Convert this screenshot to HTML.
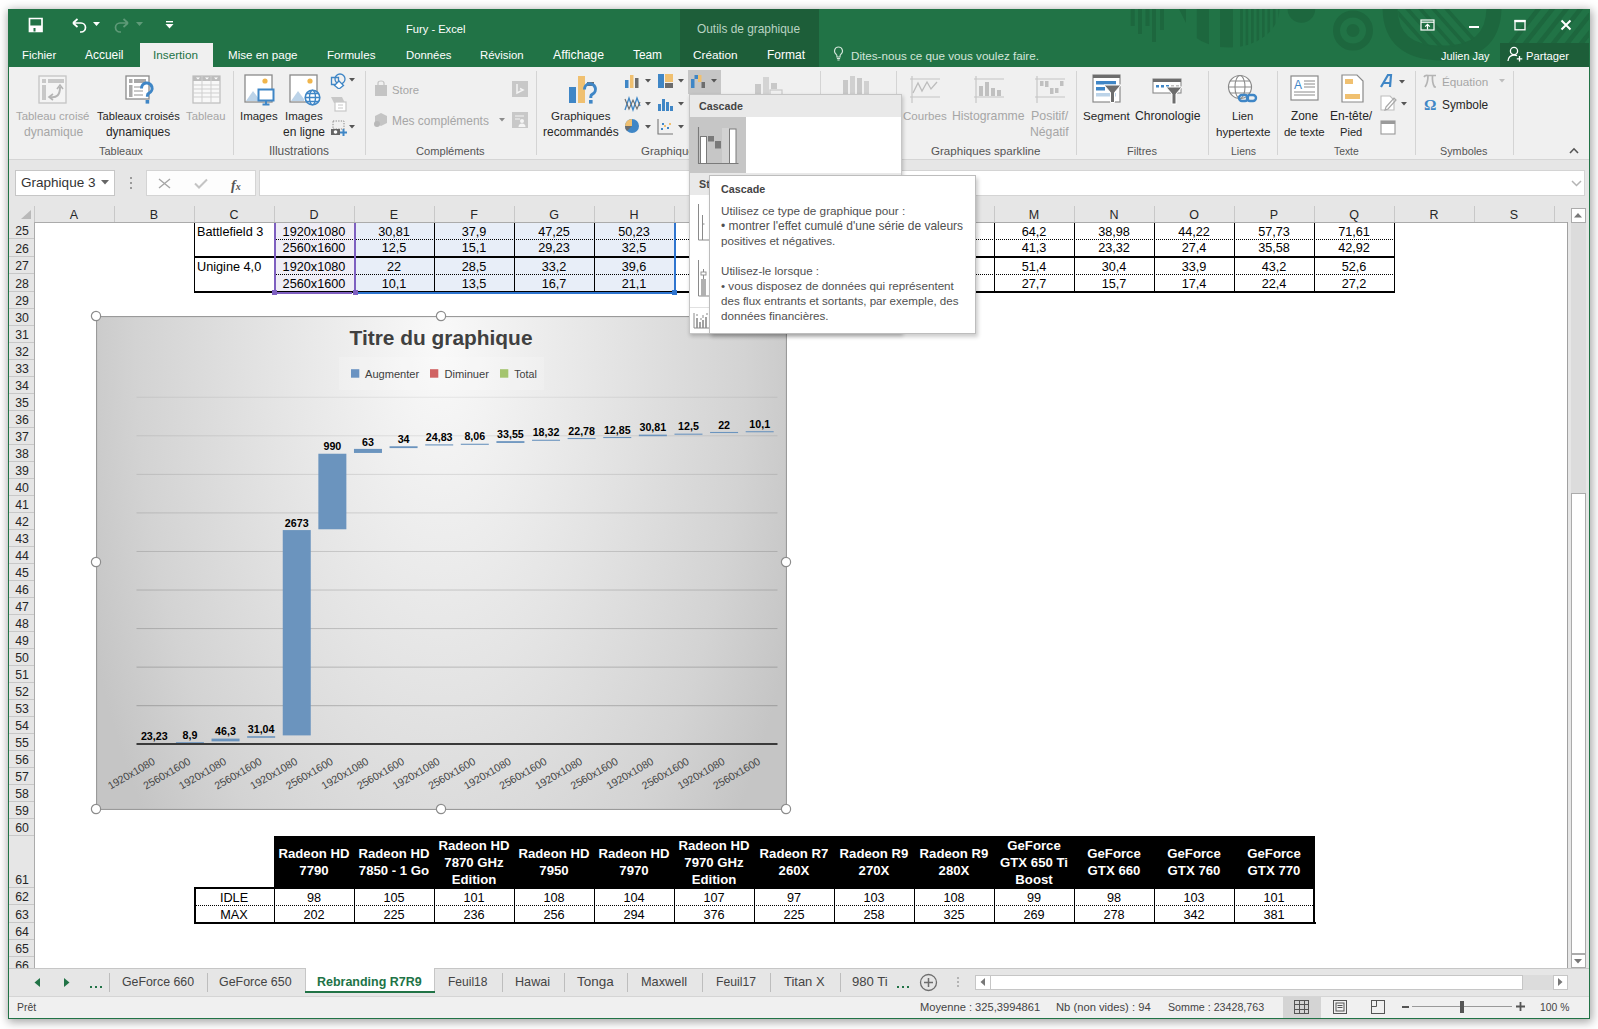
<!DOCTYPE html><html><head><meta charset="utf-8"><style>
html,body{margin:0;padding:0;}
body{width:1598px;height:1029px;position:relative;overflow:hidden;background:#fff;font-family:"Liberation Sans",sans-serif;}
.t{position:absolute;white-space:nowrap;line-height:1;}
.r{position:absolute;}
</style></head><body>
<div class="r" style="left:8px;top:9px;width:1582px;height:1010px;background:#fff;box-shadow:1px 2px 9px 1px rgba(0,0,0,0.36);"></div>
<div class="r" style="left:8px;top:9px;width:1582px;height:58px;background:#217346;"></div>
<div class="r" style="left:680px;top:9px;width:139px;height:58px;background:#1d5e39;"></div>
<div class="r" style="left:9px;top:67px;width:1580px;height:92px;background:#f0f0f0;"></div>
<div class="r" style="left:9px;top:159px;width:1580px;height:1px;background:#d5d5d5;"></div>
<div class="r" style="left:9px;top:160px;width:1580px;height:62px;background:#e6e6e6;"></div>
<div class="r" style="left:8px;top:9px;width:1px;height:1010px;background:#217346;"></div>
<div class="r" style="left:1589px;top:9px;width:1px;height:1010px;background:#217346;"></div>
<div class="r" style="left:8px;top:1018px;width:1582px;height:1px;background:#217346;"></div>

<svg class="r" style="left:28px;top:17px;" width="16" height="16" viewBox="0 0 16 16"><path d="M1.5 1.5h12.5v13h-12.5z" fill="none" stroke="#fff" stroke-width="1.7"/><rect x="1.5" y="8.5" width="12.5" height="6" fill="#fff"/><rect x="5.5" y="11" width="2" height="3.5" fill="#217346"/></svg>
<svg class="r" style="left:70px;top:17px;" width="18" height="16" viewBox="0 0 18 16"><path d="M3 6 L7.5 2 M3 6 L7.5 10 M3 6 H11 a4.5 4.5 0 0 1 0 9 H10" fill="none" stroke="#fff" stroke-width="1.7"/></svg>
<svg class="r" style="left:93px;top:22px;" width="8" height="5" viewBox="0 0 8 5"><path d="M0 0h7l-3.5 4z" fill="#fff"/></svg>
<svg class="r" style="left:113px;top:17px;" width="18" height="16" viewBox="0 0 18 16"><path d="M15 6 L10.5 2 M15 6 L10.5 10 M15 6 H7 a4.5 4.5 0 0 0 0 9 H8" fill="none" stroke="#5f9a78" stroke-width="1.7"/></svg>
<svg class="r" style="left:136px;top:22px;" width="8" height="5" viewBox="0 0 8 5"><path d="M0 0h7l-3.5 4z" fill="#5f9a78"/></svg>
<svg class="r" style="left:165px;top:20px;" width="9" height="10" viewBox="0 0 9 10"><rect x="1" y="1" width="7" height="1.4" fill="#fff"/><path d="M0.5 4h8l-4 4.5z" fill="#fff"/></svg>
<svg class="r" style="left:405.50px;top:32.50px;overflow:visible" width="1" height="1"><text x="0" y="0" text-anchor="start" font-family="Liberation Sans" font-size="11.15" fill="#ffffff">Fury - Excel</text></svg>
<svg class="r" style="left:697.40px;top:32.50px;overflow:visible" width="1" height="1"><text x="0" y="0" text-anchor="start" font-family="Liberation Sans" font-size="11.88" fill="#b9d3c2">Outils de graphique</text></svg>
<svg class="r" style="left:1100px;top:9px;" width="489" height="58" viewBox="0 0 489 58"><defs><clipPath id="tbclip"><rect x="0" y="0" width="489" height="58"/></clipPath><clipPath id="semi"><path d="M79 0 A50.2 38.6 0 0 0 179.4 0z"/></clipPath><clipPath id="ushape"><path d="M298 0 Q298 38 342 38 Q386 38 386 0z"/></clipPath><clipPath id="trs"><rect x="408" y="0" width="82" height="34"/></clipPath></defs><g clip-path="url(#tbclip)" fill="#1d673e"><rect x="30.7" y="0" width="4" height="17"/><rect x="38" y="0" width="4" height="25"/><rect x="45.5" y="0" width="4" height="17"/><rect x="52" y="0" width="4" height="33"/><rect x="60" y="0" width="4" height="21"/><g clip-path="url(#semi)"><path d="M79 0 H86 L86 14z"/><rect x="96.8" y="0" width="12.2" height="45"/><rect x="120" y="0" width="13" height="45"/><rect x="140.20" y="0" width="2.6" height="45"/><rect x="145.65" y="0" width="2.6" height="45"/><rect x="151.10" y="0" width="2.6" height="45"/><rect x="156.55" y="0" width="2.6" height="45"/><rect x="162.00" y="0" width="2.6" height="45"/><rect x="167.45" y="0" width="2.6" height="45"/><rect x="172.90" y="0" width="2.6" height="45"/><rect x="178.35" y="0" width="2.6" height="45"/></g><path d="M187.6 0 A13.8 13.8 0 0 0 215.2 0z"/><circle cx="253" cy="21.5" r="16.5" fill="none" stroke="#1d673e" stroke-width="7"/><circle cx="253" cy="21.5" r="6.5"/><path d="M290 -2 Q290 44 342 44 Q394 44 394 -2" fill="none" stroke="#1d673e" stroke-width="15"/><g clip-path="url(#ushape)"><path d="M290 -5 L330 40" stroke="#1d673e" stroke-width="3.5"/><path d="M303 -5 L343 40" stroke="#1d673e" stroke-width="3.5"/><path d="M316 -5 L356 40" stroke="#1d673e" stroke-width="3.5"/><path d="M329 -5 L369 40" stroke="#1d673e" stroke-width="3.5"/><path d="M342 -5 L382 40" stroke="#1d673e" stroke-width="3.5"/></g><g clip-path="url(#trs)"><path d="M440 -2 L410 36" stroke="#1d673e" stroke-width="4.5"/><path d="M454 -2 L424 36" stroke="#1d673e" stroke-width="4.5"/><path d="M468 -2 L438 36" stroke="#1d673e" stroke-width="4.5"/><path d="M482 -2 L452 36" stroke="#1d673e" stroke-width="4.5"/><path d="M496 -2 L466 36" stroke="#1d673e" stroke-width="4.5"/><path d="M510 -2 L480 36" stroke="#1d673e" stroke-width="4.5"/></g></g></svg>
<svg class="r" style="left:1420px;top:19px;" width="15" height="12" viewBox="0 0 15 12"><rect x="1" y="1" width="13" height="10" fill="none" stroke="#fff" stroke-width="1.2"/><path d="M1 3.2h13" stroke="#fff" stroke-width="1.2"/><path d="M7.5 10.5V5.5 M5.2 7.6 L7.5 5.3 L9.8 7.6" fill="none" stroke="#fff" stroke-width="1.2"/></svg>
<div class="r" style="left:1469px;top:26px;width:10px;height:2px;background:#fff;"></div>
<svg class="r" style="left:1514px;top:19px;" width="12" height="12" viewBox="0 0 12 12"><rect x="1" y="1.5" width="10" height="9.3" fill="none" stroke="#fff" stroke-width="1.3"/><rect x="0.5" y="1" width="11" height="2.2" fill="#fff"/></svg>
<svg class="r" style="left:1560px;top:19px;" width="12" height="12" viewBox="0 0 12 12"><path d="M1.5 1.5L10.5 10.5M10.5 1.5L1.5 10.5" stroke="#fff" stroke-width="2"/></svg>
<div class="r" style="left:140px;top:43px;width:73px;height:24px;background:#f0f0f0;"></div>
<svg class="r" style="left:21.60px;top:59.00px;overflow:visible" width="1" height="1"><text x="0" y="0" text-anchor="start" font-family="Liberation Sans" font-size="11.40" fill="#ffffff">Fichier</text></svg>
<svg class="r" style="left:85.00px;top:59.00px;overflow:visible" width="1" height="1"><text x="0" y="0" text-anchor="start" font-family="Liberation Sans" font-size="11.94" fill="#ffffff">Accueil</text></svg>
<svg class="r" style="left:153.00px;top:59.00px;overflow:visible" width="1" height="1"><text x="0" y="0" text-anchor="start" font-family="Liberation Sans" font-size="11.73" fill="#217346">Insertion</text></svg>
<svg class="r" style="left:228.00px;top:59.00px;overflow:visible" width="1" height="1"><text x="0" y="0" text-anchor="start" font-family="Liberation Sans" font-size="11.58" fill="#ffffff">Mise en page</text></svg>
<svg class="r" style="left:327.00px;top:59.00px;overflow:visible" width="1" height="1"><text x="0" y="0" text-anchor="start" font-family="Liberation Sans" font-size="11.64" fill="#ffffff">Formules</text></svg>
<svg class="r" style="left:405.50px;top:59.00px;overflow:visible" width="1" height="1"><text x="0" y="0" text-anchor="start" font-family="Liberation Sans" font-size="11.34" fill="#ffffff">Données</text></svg>
<svg class="r" style="left:480.00px;top:59.00px;overflow:visible" width="1" height="1"><text x="0" y="0" text-anchor="start" font-family="Liberation Sans" font-size="11.37" fill="#ffffff">Révision</text></svg>
<svg class="r" style="left:553.00px;top:59.00px;overflow:visible" width="1" height="1"><text x="0" y="0" text-anchor="start" font-family="Liberation Sans" font-size="12.29" fill="#ffffff">Affichage</text></svg>
<svg class="r" style="left:633.00px;top:59.00px;overflow:visible" width="1" height="1"><text x="0" y="0" text-anchor="start" font-family="Liberation Sans" font-size="11.86" fill="#ffffff">Team</text></svg>
<svg class="r" style="left:693.00px;top:59.00px;overflow:visible" width="1" height="1"><text x="0" y="0" text-anchor="start" font-family="Liberation Sans" font-size="11.80" fill="#ffffff">Création</text></svg>
<svg class="r" style="left:767.00px;top:59.00px;overflow:visible" width="1" height="1"><text x="0" y="0" text-anchor="start" font-family="Liberation Sans" font-size="12.00" fill="#ffffff">Format</text></svg>
<svg class="r" style="left:833px;top:46px;" width="11" height="15" viewBox="0 0 11 15"><path d="M5.5 1a4 4 0 0 0-2.4 7.2c.5.4.8 1 .8 1.6V11h3.2V9.8c0-.6.3-1.2.8-1.6A4 4 0 0 0 5.5 1z" fill="none" stroke="#d2e5d9" stroke-width="1.1"/><path d="M3.9 12.5h3.2M4.4 14h2.2" stroke="#d2e5d9" stroke-width="1.1"/></svg>
<svg class="r" style="left:851.00px;top:59.50px;overflow:visible" width="1" height="1"><text x="0" y="0" text-anchor="start" font-family="Liberation Sans" font-size="11.66" fill="#d2e5d9">Dites-nous ce que vous voulez faire.</text></svg>
<svg class="r" style="left:1440.50px;top:59.50px;overflow:visible" width="1" height="1"><text x="0" y="0" text-anchor="start" font-family="Liberation Sans" font-size="10.91" fill="#ffffff">Julien Jay</text></svg>
<div class="r" style="left:1500px;top:43px;width:89px;height:24px;background:#1d5e39;"></div>
<svg class="r" style="left:1507px;top:46px;" width="16" height="16" viewBox="0 0 16 16"><circle cx="7" cy="5" r="3.6" fill="none" stroke="#fff" stroke-width="1.3"/><path d="M1 15c0-3.5 2.6-6 6-6 1.2 0 2.2.3 3 .8" fill="none" stroke="#fff" stroke-width="1.3"/><path d="M12.5 10v5.5M9.8 12.8h5.5" stroke="#fff" stroke-width="1.3"/></svg>
<svg class="r" style="left:1526.00px;top:59.50px;overflow:visible" width="1" height="1"><text x="0" y="0" text-anchor="start" font-family="Liberation Sans" font-size="11.21" fill="#ffffff">Partager</text></svg>
<div class="r" style="left:233px;top:71px;width:1px;height:84px;background:#d4d4d4;"></div>
<div class="r" style="left:365px;top:71px;width:1px;height:84px;background:#d4d4d4;"></div>
<div class="r" style="left:536px;top:71px;width:1px;height:84px;background:#d4d4d4;"></div>
<div class="r" style="left:820px;top:71px;width:1px;height:84px;background:#d4d4d4;"></div>
<div class="r" style="left:896px;top:71px;width:1px;height:84px;background:#d4d4d4;"></div>
<div class="r" style="left:1076px;top:71px;width:1px;height:84px;background:#d4d4d4;"></div>
<div class="r" style="left:1208px;top:71px;width:1px;height:84px;background:#d4d4d4;"></div>
<div class="r" style="left:1277px;top:71px;width:1px;height:84px;background:#d4d4d4;"></div>
<div class="r" style="left:1415px;top:71px;width:1px;height:84px;background:#d4d4d4;"></div>
<div class="r" style="left:1513px;top:71px;width:1px;height:84px;background:#d4d4d4;"></div>
<svg class="r" style="left:99.00px;top:154.50px;overflow:visible" width="1" height="1"><text x="0" y="0" text-anchor="start" font-family="Liberation Sans" font-size="10.94" fill="#555555">Tableaux</text></svg>
<svg class="r" style="left:269.40px;top:154.50px;overflow:visible" width="1" height="1"><text x="0" y="0" text-anchor="start" font-family="Liberation Sans" font-size="11.86" fill="#555555">Illustrations</text></svg>
<svg class="r" style="left:416.40px;top:154.50px;overflow:visible" width="1" height="1"><text x="0" y="0" text-anchor="start" font-family="Liberation Sans" font-size="11.12" fill="#555555">Compléments</text></svg>
<svg class="r" style="left:640.70px;top:154.50px;overflow:visible" width="1" height="1"><text x="0" y="0" text-anchor="start" font-family="Liberation Sans" font-size="11.53" fill="#555555">Graphiques</text></svg>
<svg class="r" style="left:931.00px;top:154.50px;overflow:visible" width="1" height="1"><text x="0" y="0" text-anchor="start" font-family="Liberation Sans" font-size="11.59" fill="#555555">Graphiques sparkline</text></svg>
<svg class="r" style="left:1127.00px;top:154.50px;overflow:visible" width="1" height="1"><text x="0" y="0" text-anchor="start" font-family="Liberation Sans" font-size="11.02" fill="#555555">Filtres</text></svg>
<svg class="r" style="left:1230.50px;top:154.50px;overflow:visible" width="1" height="1"><text x="0" y="0" text-anchor="start" font-family="Liberation Sans" font-size="10.46" fill="#555555">Liens</text></svg>
<svg class="r" style="left:1333.75px;top:154.50px;overflow:visible" width="1" height="1"><text x="0" y="0" text-anchor="start" font-family="Liberation Sans" font-size="10.36" fill="#555555">Texte</text></svg>
<svg class="r" style="left:1439.75px;top:154.50px;overflow:visible" width="1" height="1"><text x="0" y="0" text-anchor="start" font-family="Liberation Sans" font-size="10.82" fill="#555555">Symboles</text></svg>
<svg class="r" style="left:38px;top:75px;" width="30" height="29" viewBox="0 0 30 29"><rect x="1" y="1" width="27" height="27" fill="#f4f4f4" stroke="#c4c4c4" stroke-width="1.3"/><rect x="4" y="4" width="4" height="4" fill="#c8c8c8"/><rect x="10" y="4" width="16" height="4" fill="#c8c8c8"/><rect x="4" y="10" width="4" height="15" fill="#c8c8c8"/><path d="M12 22 Q22 24 22 12" fill="none" stroke="#b4b4b4" stroke-width="2"/><path d="M19 14 L22 10 L25 14 M15 19 L11 22 L15 25" fill="none" stroke="#b4b4b4" stroke-width="1.6"/></svg>
<svg class="r" style="left:16.30px;top:119.80px;overflow:visible" width="1" height="1"><text x="0" y="0" text-anchor="start" font-family="Liberation Sans" font-size="11.40" fill="#a6a6a6">Tableau croisé</text></svg>
<svg class="r" style="left:23.80px;top:135.70px;overflow:visible" width="1" height="1"><text x="0" y="0" text-anchor="start" font-family="Liberation Sans" font-size="12.10" fill="#a6a6a6">dynamique</text></svg>
<svg class="r" style="left:125px;top:75px;" width="30" height="31" viewBox="0 0 30 31"><rect x="1" y="1" width="23" height="23" fill="#fff" stroke="#8a8a8a" stroke-width="1.3"/><rect x="4" y="4" width="3.5" height="4" fill="#a9a9a9"/><rect x="9" y="4" width="12" height="4" fill="#a9a9a9"/><rect x="4" y="10" width="3.5" height="12" fill="#a9a9a9"/><rect x="9" y="11" width="9" height="2" fill="#c9c9c9"/><rect x="9" y="15" width="9" height="2" fill="#c9c9c9"/><rect x="9" y="19" width="9" height="2" fill="#c9c9c9"/><path d="M16.5 13.5 a5.3 5.3 0 1 1 7.5 4.6 c-1.2.6-1.6 1.3-1.6 2.6v1" fill="none" stroke="#3f86c6" stroke-width="3"/><rect x="20.6" y="25" width="3.6" height="3.6" fill="#3f86c6"/></svg>
<svg class="r" style="left:96.60px;top:119.80px;overflow:visible" width="1" height="1"><text x="0" y="0" text-anchor="start" font-family="Liberation Sans" font-size="11.14" fill="#262626">Tableaux croisés</text></svg>
<svg class="r" style="left:105.60px;top:135.70px;overflow:visible" width="1" height="1"><text x="0" y="0" text-anchor="start" font-family="Liberation Sans" font-size="11.92" fill="#262626">dynamiques</text></svg>
<svg class="r" style="left:192px;top:75px;" width="29" height="29" viewBox="0 0 29 29"><rect x="1" y="1" width="27" height="27" fill="#f8f8f8" stroke="#bdbdbd" stroke-width="1.2"/><rect x="1" y="1" width="27" height="5" fill="#bdbdbd"/><path d="M1 10h27" stroke="#cfcfcf" stroke-width="1"/><path d="M1 14h27" stroke="#cfcfcf" stroke-width="1"/><path d="M1 18h27" stroke="#cfcfcf" stroke-width="1"/><path d="M1 22h27" stroke="#cfcfcf" stroke-width="1"/><path d="M10 1v27" stroke="#cfcfcf" stroke-width="1"/><path d="M19 1v27" stroke="#cfcfcf" stroke-width="1"/><path d="M4 2.5h4l-2 2z" fill="#fff"/><path d="M13 2.5h4l-2 2z" fill="#fff"/><path d="M22 2.5h4l-2 2z" fill="#fff"/></svg>
<svg class="r" style="left:186.00px;top:119.80px;overflow:visible" width="1" height="1"><text x="0" y="0" text-anchor="start" font-family="Liberation Sans" font-size="11.25" fill="#a6a6a6">Tableau</text></svg>
<svg class="r" style="left:244px;top:74px;" width="32" height="32" viewBox="0 0 32 32"><rect x="1" y="1" width="27" height="27" fill="#fff" stroke="#8a8a8a" stroke-width="1.3"/><circle cx="21" cy="7" r="2.6" fill="#f0b54c"/><path d="M2 27 L9 17 L15 25 V27z" fill="#bcd3e8"/><rect x="14.5" y="15.5" width="15" height="11" fill="#fff" stroke="#3f86c6" stroke-width="2"/><path d="M22 27v3 M18.5 30.5h7" stroke="#3f86c6" stroke-width="2"/></svg>
<svg class="r" style="left:240.00px;top:119.80px;overflow:visible" width="1" height="1"><text x="0" y="0" text-anchor="start" font-family="Liberation Sans" font-size="11.47" fill="#262626">Images</text></svg>
<svg class="r" style="left:289px;top:74px;" width="32" height="32" viewBox="0 0 32 32"><rect x="1" y="1" width="27" height="27" fill="#fff" stroke="#8a8a8a" stroke-width="1.3"/><circle cx="21" cy="7" r="2.6" fill="#f0b54c"/><path d="M2 27 L9 17 L15 25 V27z" fill="#bcd3e8"/><circle cx="23.5" cy="23.5" r="7.3" fill="#fff" stroke="#3f86c6" stroke-width="1.6"/><ellipse cx="23.5" cy="23.5" rx="3" ry="7.3" fill="none" stroke="#3f86c6" stroke-width="1.4"/><path d="M16.2 23.5h14.6 M17.5 19.5h12 M17.5 27.5h12" stroke="#3f86c6" stroke-width="1.3"/></svg>
<svg class="r" style="left:285.00px;top:119.80px;overflow:visible" width="1" height="1"><text x="0" y="0" text-anchor="start" font-family="Liberation Sans" font-size="11.47" fill="#262626">Images</text></svg>
<svg class="r" style="left:283.00px;top:135.70px;overflow:visible" width="1" height="1"><text x="0" y="0" text-anchor="start" font-family="Liberation Sans" font-size="11.99" fill="#262626">en ligne</text></svg>
<svg class="r" style="left:330px;top:73px;" width="16" height="16" viewBox="0 0 16 16"><path d="M1.5 4.5h7v7h-7z" fill="none" stroke="#3f86c6" stroke-width="1.3"/><circle cx="10" cy="6" r="5" fill="none" stroke="#3f86c6" stroke-width="1.3"/><path d="M9 8 L13.5 12.5 L9 16 L4.5 12.5z" fill="#fff" stroke="#3f86c6" stroke-width="1.3"/></svg>
<svg class="r" style="left:349px;top:78px;" width="7" height="5" viewBox="0 0 7 5"><path d="M0 0h6l-3 3.5z" fill="#555"/></svg>
<svg class="r" style="left:330px;top:96px;" width="17" height="16" viewBox="0 0 17 16"><path d="M1 1h11l3 6H4z" fill="#c8c8c8"/><rect x="5" y="6" width="11" height="9" fill="#fff" stroke="#c8c8c8" stroke-width="1.2"/><path d="M8 9h5M8 12h5" stroke="#c8c8c8" stroke-width="1"/></svg>
<svg class="r" style="left:330px;top:120px;" width="17" height="16" viewBox="0 0 17 16"><rect x="3" y="1" width="11" height="8" fill="none" stroke="#888" stroke-width="1" stroke-dasharray="1.3 1.3"/><rect x="1" y="9" width="9" height="6" fill="#666"/><circle cx="5.5" cy="12" r="1.8" fill="#fff"/><path d="M13.5 9v7M10 12.5h7" stroke="#3f86c6" stroke-width="2"/></svg>
<svg class="r" style="left:349px;top:125px;" width="7" height="5" viewBox="0 0 7 5"><path d="M0 0h6l-3 3.5z" fill="#555"/></svg>
<svg class="r" style="left:373px;top:80px;" width="16" height="17" viewBox="0 0 16 17"><path d="M2 5h12v11H2z" fill="#c4c4c4"/><path d="M5 5 V3 a3 2 0 0 1 6 0 V5" fill="none" stroke="#c4c4c4" stroke-width="1.2"/></svg>
<svg class="r" style="left:392.00px;top:93.60px;overflow:visible" width="1" height="1"><text x="0" y="0" text-anchor="start" font-family="Liberation Sans" font-size="11.30" fill="#a6a6a6">Store</text></svg>
<svg class="r" style="left:512px;top:81px;" width="17" height="16" viewBox="0 0 17 16"><rect x="0" y="0" width="16" height="16" fill="#c8c8c8"/><path d="M5 3v9l6-3-3-1.5" fill="none" stroke="#f4f4f4" stroke-width="1.5"/></svg>
<svg class="r" style="left:373px;top:112px;" width="16" height="16" viewBox="0 0 16 16"><path d="M8 1l6 3v7l-6 3-6-3V4z" fill="#c4c4c4"/><circle cx="4" cy="12" r="3" fill="#b8b8b8"/></svg>
<svg class="r" style="left:392.40px;top:125.00px;overflow:visible" width="1" height="1"><text x="0" y="0" text-anchor="start" font-family="Liberation Sans" font-size="11.95" fill="#a6a6a6">Mes compléments</text></svg>
<svg class="r" style="left:499px;top:118px;" width="7" height="5" viewBox="0 0 7 5"><path d="M0 0h6l-3 3.5z" fill="#8c8c8c"/></svg>
<svg class="r" style="left:512px;top:112px;" width="17" height="16" viewBox="0 0 17 16"><rect x="0" y="0" width="16" height="16" fill="#c8c8c8"/><path d="M3 4h9M3 7h5" stroke="#f4f4f4" stroke-width="1.2"/><circle cx="10" cy="9" r="2" fill="#f4f4f4"/><path d="M6.5 15a3.5 3.5 0 0 1 7 0" fill="#f4f4f4"/></svg>
<svg class="r" style="left:567px;top:74px;" width="32" height="33" viewBox="0 0 32 33"><rect x="2" y="13" width="7" height="16" fill="#3f86c6"/><rect x="11" y="2" width="7" height="27" fill="#f0c070"/><rect x="20" y="8" width="7" height="4" fill="#6d6d6d"/><path d="M17.5 15.5 a5.5 5.5 0 1 1 8 4.6 c-1.2.6-1.7 1.3-1.7 2.6v1.3" fill="none" stroke="#3f86c6" stroke-width="3"/><rect x="22" y="26" width="3.6" height="3.6" fill="#3f86c6"/></svg>
<svg class="r" style="left:551.40px;top:120.30px;overflow:visible" width="1" height="1"><text x="0" y="0" text-anchor="start" font-family="Liberation Sans" font-size="11.53" fill="#262626">Graphiques</text></svg>
<svg class="r" style="left:543.00px;top:135.50px;overflow:visible" width="1" height="1"><text x="0" y="0" text-anchor="start" font-family="Liberation Sans" font-size="11.96" fill="#262626">recommandés</text></svg>
<svg class="r" style="left:624px;top:73px;" width="16" height="16" viewBox="0 0 16 16"><rect x="1" y="7" width="3.5" height="8" fill="#3f86c6"/><rect x="6" y="2" width="3.5" height="13" fill="#f0c070"/><rect x="11" y="5" width="3.5" height="10" fill="#6d6d6d"/></svg>
<svg class="r" style="left:645px;top:79px;" width="7" height="5" viewBox="0 0 7 5"><path d="M0 0h6l-3 3.5z" fill="#555"/></svg>
<svg class="r" style="left:657px;top:73px;" width="17" height="16" viewBox="0 0 17 16"><rect x="1" y="1" width="6" height="14" fill="#3f86c6"/><rect x="8" y="1" width="8" height="8" fill="#f0c070"/><rect x="8" y="10" width="8" height="5" fill="#6d6d6d"/></svg>
<svg class="r" style="left:678px;top:79px;" width="7" height="5" viewBox="0 0 7 5"><path d="M0 0h6l-3 3.5z" fill="#555"/></svg>
<div class="r" style="left:688px;top:70px;width:33px;height:24px;background:#c6c6c6;"></div>
<svg class="r" style="left:690px;top:73px;" width="17" height="16" viewBox="0 0 17 16"><rect x="1" y="6" width="3.5" height="9" fill="#3f86c6"/><rect x="4.5" y="2" width="3.5" height="4" fill="#3f86c6"/><rect x="8" y="2" width="3.5" height="7" fill="#f0c070"/><rect x="11.5" y="9" width="3.5" height="6" fill="#6d6d6d"/></svg>
<svg class="r" style="left:711px;top:79px;" width="7" height="5" viewBox="0 0 7 5"><path d="M0 0h6l-3 3.5z" fill="#555"/></svg>
<svg class="r" style="left:624px;top:96px;" width="17" height="16" viewBox="0 0 17 16"><path d="M1 14 L5 2 L9 14 L13 2 L16 10" fill="none" stroke="#3f86c6" stroke-width="1.3"/><path d="M1 3 L5 13 L9 4 L13 13 L16 6" fill="none" stroke="#6d6d6d" stroke-width="1.1"/></svg>
<svg class="r" style="left:645px;top:102px;" width="7" height="5" viewBox="0 0 7 5"><path d="M0 0h6l-3 3.5z" fill="#555"/></svg>
<svg class="r" style="left:657px;top:96px;" width="17" height="16" viewBox="0 0 17 16"><rect x="1" y="8" width="3" height="7" fill="#3f86c6"/><rect x="5" y="3" width="3" height="12" fill="#3f86c6"/><rect x="9" y="6" width="3" height="9" fill="#3f86c6"/><rect x="13" y="10" width="3" height="5" fill="#3f86c6"/></svg>
<svg class="r" style="left:678px;top:102px;" width="7" height="5" viewBox="0 0 7 5"><path d="M0 0h6l-3 3.5z" fill="#555"/></svg>
<svg class="r" style="left:624px;top:118px;" width="17" height="16" viewBox="0 0 17 16"><circle cx="8" cy="8" r="7" fill="#3f86c6"/><path d="M8 8 V1 A7 7 0 0 0 1 8z" fill="#f0c070"/><path d="M8 8 H1 A7 7 0 0 0 3 13z" fill="#6d6d6d"/></svg>
<svg class="r" style="left:645px;top:125px;" width="7" height="5" viewBox="0 0 7 5"><path d="M0 0h6l-3 3.5z" fill="#555"/></svg>
<svg class="r" style="left:657px;top:118px;" width="17" height="17" viewBox="0 0 17 17"><path d="M1 1v15h15" fill="none" stroke="#777" stroke-width="1.1"/><rect x="4" y="10" width="2" height="2" fill="#3f86c6"/><rect x="7" y="7" width="2" height="2" fill="#f0c070"/><rect x="10" y="9" width="2" height="2" fill="#3f86c6"/><rect x="12" y="5" width="2" height="2" fill="#f0c070"/><rect x="5" y="5" width="2" height="2" fill="#3f86c6"/></svg>
<svg class="r" style="left:678px;top:125px;" width="7" height="5" viewBox="0 0 7 5"><path d="M0 0h6l-3 3.5z" fill="#555"/></svg>
<svg class="r" style="left:752px;top:74px;" width="32" height="20" viewBox="0 0 32 20"><rect x="3" y="10" width="6" height="12" fill="#c8c8c8"/><rect x="11" y="3" width="6" height="19" fill="#d4d4d4"/><rect x="19" y="9" width="6" height="6" fill="#c8c8c8"/><rect x="18" y="16" width="12" height="6" fill="none" stroke="#c8c8c8" stroke-width="1.2"/></svg>
<svg class="r" style="left:841px;top:74px;" width="32" height="20" viewBox="0 0 32 20"><rect x="2" y="6" width="5" height="16" fill="#c8c8c8"/><rect x="9" y="2" width="5" height="20" fill="#d0d0d0"/><rect x="16" y="4" width="5" height="18" fill="#c8c8c8"/><rect x="23" y="7" width="5" height="15" fill="#d0d0d0"/></svg>
<svg class="r" style="left:909px;top:74px;" width="32" height="30" viewBox="0 0 32 30"><path d="M3 2v27 M1 5h30 M1 23h30" stroke="#c4c4c4" stroke-width="1.1" fill="none"/><path d="M4 19 L9 9 L13 17 L18 8 L22 15 L28 8" fill="none" stroke="#bcbcbc" stroke-width="1.3"/></svg>
<svg class="r" style="left:903.00px;top:119.80px;overflow:visible" width="1" height="1"><text x="0" y="0" text-anchor="start" font-family="Liberation Sans" font-size="11.57" fill="#a6a6a6">Courbes</text></svg>
<svg class="r" style="left:973px;top:74px;" width="32" height="30" viewBox="0 0 32 30"><path d="M3 2v27 M1 5h30 M1 23h30" stroke="#c4c4c4" stroke-width="1.1" fill="none"/><rect x="6" y="12" width="4" height="10" fill="#c0c0c0"/><rect x="12" y="8" width="4" height="14" fill="#c0c0c0"/><rect x="18" y="14" width="4" height="8" fill="#c0c0c0"/><rect x="24" y="16" width="4" height="6" fill="#c0c0c0"/></svg>
<svg class="r" style="left:952.00px;top:119.80px;overflow:visible" width="1" height="1"><text x="0" y="0" text-anchor="start" font-family="Liberation Sans" font-size="12.19" fill="#a6a6a6">Histogramme</text></svg>
<svg class="r" style="left:1034px;top:74px;" width="32" height="30" viewBox="0 0 32 30"><path d="M3 2v27 M1 5h30 M1 23h30" stroke="#c4c4c4" stroke-width="1.1" fill="none"/><rect x="6" y="7" width="3.5" height="5" fill="#c0c0c0"/><rect x="11" y="7" width="3.5" height="6" fill="#c0c0c0"/><rect x="16" y="14" width="3.5" height="6" fill="#c0c0c0"/><rect x="21" y="14" width="3.5" height="5" fill="#c0c0c0"/><rect x="26" y="7" width="3.5" height="5" fill="#c0c0c0"/></svg>
<svg class="r" style="left:1030.75px;top:119.80px;overflow:visible" width="1" height="1"><text x="0" y="0" text-anchor="start" font-family="Liberation Sans" font-size="12.41" fill="#a6a6a6">Positif/</text></svg>
<svg class="r" style="left:1030.00px;top:135.70px;overflow:visible" width="1" height="1"><text x="0" y="0" text-anchor="start" font-family="Liberation Sans" font-size="12.23" fill="#a6a6a6">Négatif</text></svg>
<svg class="r" style="left:1092px;top:74px;" width="30" height="30" viewBox="0 0 30 30"><rect x="1" y="1" width="27" height="27" fill="#fff" stroke="#8a8a8a" stroke-width="1.2"/><rect x="1" y="1" width="27" height="3" fill="#6d6d6d"/><rect x="4" y="7" width="20" height="3.5" fill="#3f86c6"/><rect x="4" y="13" width="9" height="3.5" fill="#3f86c6"/><rect x="4" y="19" width="20" height="3.5" fill="#bcd3e8"/><path d="M12 11h17l-6.5 7.5v10h-4v-10z" fill="#6d6d6d" stroke="#fff" stroke-width="1"/></svg>
<svg class="r" style="left:1082.50px;top:119.80px;overflow:visible" width="1" height="1"><text x="0" y="0" text-anchor="start" font-family="Liberation Sans" font-size="11.68" fill="#262626">Segment</text></svg>
<svg class="r" style="left:1152px;top:78px;" width="31" height="28" viewBox="0 0 31 28"><rect x="1" y="1" width="28" height="14" fill="#fff" stroke="#8a8a8a" stroke-width="1.1"/><rect x="1" y="1" width="28" height="3" fill="#6d6d6d"/><rect x="4" y="7" width="3" height="2.5" fill="#3f86c6"/><rect x="9" y="7" width="3" height="2.5" fill="#3f86c6"/><rect x="14" y="7" width="3" height="2.5" fill="#3f86c6"/><rect x="19" y="7" width="3" height="2.5" fill="#c0c0c0"/><rect x="24" y="7" width="3" height="2.5" fill="#c0c0c0"/><path d="M14 9h16l-6 7v10h-4v-10z" fill="#6d6d6d" stroke="#fff" stroke-width="1"/></svg>
<svg class="r" style="left:1135.00px;top:119.80px;overflow:visible" width="1" height="1"><text x="0" y="0" text-anchor="start" font-family="Liberation Sans" font-size="12.15" fill="#262626">Chronologie</text></svg>
<svg class="r" style="left:1227px;top:74px;" width="33" height="32" viewBox="0 0 33 32"><circle cx="13" cy="13" r="11.5" fill="#fff" stroke="#8a8a8a" stroke-width="1.2"/><ellipse cx="13" cy="13" rx="5" ry="11.5" fill="none" stroke="#8a8a8a" stroke-width="1.1"/><path d="M1.5 13h23 M3 7h20 M3 19h20" stroke="#8a8a8a" stroke-width="1.1"/><rect x="12" y="21" width="9" height="6" rx="3" fill="none" stroke="#3f86c6" stroke-width="2.4"/><rect x="20" y="21" width="9" height="6" rx="3" fill="none" stroke="#3f86c6" stroke-width="2.4"/></svg>
<svg class="r" style="left:1232.25px;top:119.80px;overflow:visible" width="1" height="1"><text x="0" y="0" text-anchor="start" font-family="Liberation Sans" font-size="11.24" fill="#262626">Lien</text></svg>
<svg class="r" style="left:1215.50px;top:135.70px;overflow:visible" width="1" height="1"><text x="0" y="0" text-anchor="start" font-family="Liberation Sans" font-size="11.67" fill="#262626">hypertexte</text></svg>
<svg class="r" style="left:1290px;top:75px;" width="30" height="27" viewBox="0 0 30 27"><rect x="1" y="1" width="27" height="24" fill="#fff" stroke="#8a8a8a" stroke-width="1.2"/><text x="4" y="14" font-family="Liberation Sans" font-size="12" fill="#3f86c6">A</text><path d="M14 6h11M14 9h11M14 12h11M4 17h21M4 20h21" stroke="#8a8a8a" stroke-width="1"/></svg>
<svg class="r" style="left:1291.00px;top:119.80px;overflow:visible" width="1" height="1"><text x="0" y="0" text-anchor="start" font-family="Liberation Sans" font-size="11.85" fill="#262626">Zone</text></svg>
<svg class="r" style="left:1284.25px;top:135.70px;overflow:visible" width="1" height="1"><text x="0" y="0" text-anchor="start" font-family="Liberation Sans" font-size="11.45" fill="#262626">de texte</text></svg>
<svg class="r" style="left:1341px;top:74px;" width="23" height="30" viewBox="0 0 23 30"><path d="M1 1h15l6 6v21H1z" fill="#fff" stroke="#8a8a8a" stroke-width="1.2"/><rect x="4" y="5" width="8" height="5" fill="#f0c070"/><rect x="4" y="20" width="15" height="5" fill="#f0c070"/></svg>
<svg class="r" style="left:1330.00px;top:119.80px;overflow:visible" width="1" height="1"><text x="0" y="0" text-anchor="start" font-family="Liberation Sans" font-size="12.06" fill="#262626">En-tête/</text></svg>
<svg class="r" style="left:1340.00px;top:135.70px;overflow:visible" width="1" height="1"><text x="0" y="0" text-anchor="start" font-family="Liberation Sans" font-size="11.12" fill="#262626">Pied</text></svg>
<svg class="r" style="left:1380px;top:74px;" width="14" height="14" viewBox="0 0 14 14"><path d="M1 13 L8 1 H11 L10 13 M4 9h6" fill="none" stroke="#3f86c6" stroke-width="2.2"/></svg>
<svg class="r" style="left:1399px;top:80px;" width="7" height="5" viewBox="0 0 7 5"><path d="M0 0h6l-3 3.5z" fill="#555"/></svg>
<svg class="r" style="left:1380px;top:95px;" width="17" height="17" viewBox="0 0 17 17"><path d="M1 1h9l4 4v10H1z" fill="#fff" stroke="#bdbdbd" stroke-width="1.1"/><path d="M6 12 L14 3 L16 5 L8 14 L5 15z" fill="none" stroke="#a8a8a8" stroke-width="1.2"/></svg>
<svg class="r" style="left:1401px;top:102px;" width="7" height="5" viewBox="0 0 7 5"><path d="M0 0h6l-3 3.5z" fill="#555"/></svg>
<svg class="r" style="left:1380px;top:120px;" width="16" height="15" viewBox="0 0 16 15"><rect x="1" y="1" width="14" height="13" fill="#fff" stroke="#9a9a9a" stroke-width="1.1"/><rect x="1" y="1" width="14" height="3" fill="#9a9a9a"/></svg>
<svg class="r" style="left:1423px;top:74px;" width="14" height="14" viewBox="0 0 14 14"><path d="M1 3 Q2 1 5 1.5 H13 M5 1.5 Q5 9 2 13 M9.5 1.5 Q9 9 11.5 13 H13" fill="none" stroke="#b4b4b4" stroke-width="1.7"/></svg>
<svg class="r" style="left:1441.75px;top:86.25px;overflow:visible" width="1" height="1"><text x="0" y="0" text-anchor="start" font-family="Liberation Sans" font-size="11.72" fill="#a6a6a6">Équation</text></svg>
<svg class="r" style="left:1499px;top:79px;" width="7" height="5" viewBox="0 0 7 5"><path d="M0 0h6l-3 3.5z" fill="#bdbdbd"/></svg>
<svg class="r" style="left:1424.00px;top:110.00px;overflow:visible" width="1" height="1"><text x="0" y="0" text-anchor="start" font-family="Liberation Serif" font-size="15.50" fill="#3f86c6" font-weight="bold">&#937;</text></svg>
<svg class="r" style="left:1441.75px;top:109.25px;overflow:visible" width="1" height="1"><text x="0" y="0" text-anchor="start" font-family="Liberation Sans" font-size="11.89" fill="#262626">Symbole</text></svg>
<svg class="r" style="left:1569px;top:147px;" width="10" height="7" viewBox="0 0 10 7"><path d="M1 6 L5 1.8 L9 6" fill="none" stroke="#555" stroke-width="1.6"/></svg>
<div class="r" style="left:15px;top:170px;width:100px;height:26px;background:#fff;box-sizing:border-box;border:1px solid #c6c6c6;"></div>
<svg class="r" style="left:21.20px;top:187.20px;overflow:visible" width="1" height="1"><text x="0" y="0" text-anchor="start" font-family="Liberation Sans" font-size="13.54" fill="#333333">Graphique 3</text></svg>
<svg class="r" style="left:101px;top:180px;" width="9" height="6" viewBox="0 0 9 6"><path d="M0 0h8l-4 4.5z" fill="#666"/></svg>
<div class="r" style="left:130px;top:177px;width:2px;height:2px;background:#9a9a9a;"></div>
<div class="r" style="left:130px;top:182px;width:2px;height:2px;background:#9a9a9a;"></div>
<div class="r" style="left:130px;top:187px;width:2px;height:2px;background:#9a9a9a;"></div>
<div class="r" style="left:146px;top:170px;width:110px;height:26px;background:#fdfdfd;box-sizing:border-box;border:1px solid #d4d4d4;"></div>
<svg class="r" style="left:158px;top:178px;" width="13" height="11" viewBox="0 0 13 11"><path d="M1 1L12 10M12 1L1 10" stroke="#a6a6a6" stroke-width="1.4"/></svg>
<svg class="r" style="left:194px;top:178px;" width="14" height="11" viewBox="0 0 14 11"><path d="M1 5.5 L5 9.5 L13 1.5" fill="none" stroke="#c4c4c4" stroke-width="2"/></svg>
<svg class="r" style="left:231.00px;top:189.50px;overflow:visible" width="1" height="1"><text x="0" y="0" text-anchor="start" font-family="Liberation Serif" font-size="14.00" fill="#555555"><tspan font-style="italic" font-weight="bold">f</tspan><tspan font-style="italic" font-weight="bold" font-size="10">x</tspan></text></svg>
<div class="r" style="left:259px;top:170px;width:1326px;height:26px;background:#fff;box-sizing:border-box;border:1px solid #d4d4d4;"></div>
<svg class="r" style="left:1571px;top:180px;" width="11" height="7" viewBox="0 0 11 7"><path d="M1 1 L5.5 5.5 L10 1" fill="none" stroke="#b4b4b4" stroke-width="1.5"/></svg>
<div class="r" style="left:9px;top:205px;width:1559px;height:17px;background:#e6e6e6;"></div>
<div class="r" style="left:9px;top:222px;width:1559px;height:1px;background:#ababab;"></div>
<svg class="r" style="left:21px;top:210px;" width="11" height="10" viewBox="0 0 11 10"><path d="M10 0V9H0z" fill="#b9b9b9"/></svg>
<div class="r" style="left:34px;top:206px;width:1px;height:16px;background:#c8c8c8;"></div>
<svg class="r" style="left:74.00px;top:218.70px;overflow:visible" width="1" height="1"><text x="0" y="0" text-anchor="middle" font-family="Liberation Sans" font-size="12.50" fill="#262626">A</text></svg>
<div class="r" style="left:114px;top:206px;width:1px;height:16px;background:#c8c8c8;"></div>
<svg class="r" style="left:154.00px;top:218.70px;overflow:visible" width="1" height="1"><text x="0" y="0" text-anchor="middle" font-family="Liberation Sans" font-size="12.50" fill="#262626">B</text></svg>
<div class="r" style="left:194px;top:206px;width:1px;height:16px;background:#c8c8c8;"></div>
<svg class="r" style="left:234.00px;top:218.70px;overflow:visible" width="1" height="1"><text x="0" y="0" text-anchor="middle" font-family="Liberation Sans" font-size="12.50" fill="#262626">C</text></svg>
<div class="r" style="left:274px;top:206px;width:1px;height:16px;background:#c8c8c8;"></div>
<svg class="r" style="left:314.00px;top:218.70px;overflow:visible" width="1" height="1"><text x="0" y="0" text-anchor="middle" font-family="Liberation Sans" font-size="12.50" fill="#262626">D</text></svg>
<div class="r" style="left:354px;top:206px;width:1px;height:16px;background:#c8c8c8;"></div>
<svg class="r" style="left:394.00px;top:218.70px;overflow:visible" width="1" height="1"><text x="0" y="0" text-anchor="middle" font-family="Liberation Sans" font-size="12.50" fill="#262626">E</text></svg>
<div class="r" style="left:434px;top:206px;width:1px;height:16px;background:#c8c8c8;"></div>
<svg class="r" style="left:474.00px;top:218.70px;overflow:visible" width="1" height="1"><text x="0" y="0" text-anchor="middle" font-family="Liberation Sans" font-size="12.50" fill="#262626">F</text></svg>
<div class="r" style="left:514px;top:206px;width:1px;height:16px;background:#c8c8c8;"></div>
<svg class="r" style="left:554.00px;top:218.70px;overflow:visible" width="1" height="1"><text x="0" y="0" text-anchor="middle" font-family="Liberation Sans" font-size="12.50" fill="#262626">G</text></svg>
<div class="r" style="left:594px;top:206px;width:1px;height:16px;background:#c8c8c8;"></div>
<svg class="r" style="left:634.00px;top:218.70px;overflow:visible" width="1" height="1"><text x="0" y="0" text-anchor="middle" font-family="Liberation Sans" font-size="12.50" fill="#262626">H</text></svg>
<div class="r" style="left:674px;top:206px;width:1px;height:16px;background:#c8c8c8;"></div>
<svg class="r" style="left:714.00px;top:218.70px;overflow:visible" width="1" height="1"><text x="0" y="0" text-anchor="middle" font-family="Liberation Sans" font-size="12.50" fill="#262626">I</text></svg>
<div class="r" style="left:754px;top:206px;width:1px;height:16px;background:#c8c8c8;"></div>
<svg class="r" style="left:794.00px;top:218.70px;overflow:visible" width="1" height="1"><text x="0" y="0" text-anchor="middle" font-family="Liberation Sans" font-size="12.50" fill="#262626">J</text></svg>
<div class="r" style="left:834px;top:206px;width:1px;height:16px;background:#c8c8c8;"></div>
<svg class="r" style="left:874.00px;top:218.70px;overflow:visible" width="1" height="1"><text x="0" y="0" text-anchor="middle" font-family="Liberation Sans" font-size="12.50" fill="#262626">K</text></svg>
<div class="r" style="left:914px;top:206px;width:1px;height:16px;background:#c8c8c8;"></div>
<svg class="r" style="left:954.00px;top:218.70px;overflow:visible" width="1" height="1"><text x="0" y="0" text-anchor="middle" font-family="Liberation Sans" font-size="12.50" fill="#262626">L</text></svg>
<div class="r" style="left:994px;top:206px;width:1px;height:16px;background:#c8c8c8;"></div>
<svg class="r" style="left:1034.00px;top:218.70px;overflow:visible" width="1" height="1"><text x="0" y="0" text-anchor="middle" font-family="Liberation Sans" font-size="12.50" fill="#262626">M</text></svg>
<div class="r" style="left:1074px;top:206px;width:1px;height:16px;background:#c8c8c8;"></div>
<svg class="r" style="left:1114.00px;top:218.70px;overflow:visible" width="1" height="1"><text x="0" y="0" text-anchor="middle" font-family="Liberation Sans" font-size="12.50" fill="#262626">N</text></svg>
<div class="r" style="left:1154px;top:206px;width:1px;height:16px;background:#c8c8c8;"></div>
<svg class="r" style="left:1194.00px;top:218.70px;overflow:visible" width="1" height="1"><text x="0" y="0" text-anchor="middle" font-family="Liberation Sans" font-size="12.50" fill="#262626">O</text></svg>
<div class="r" style="left:1234px;top:206px;width:1px;height:16px;background:#c8c8c8;"></div>
<svg class="r" style="left:1274.00px;top:218.70px;overflow:visible" width="1" height="1"><text x="0" y="0" text-anchor="middle" font-family="Liberation Sans" font-size="12.50" fill="#262626">P</text></svg>
<div class="r" style="left:1314px;top:206px;width:1px;height:16px;background:#c8c8c8;"></div>
<svg class="r" style="left:1354.00px;top:218.70px;overflow:visible" width="1" height="1"><text x="0" y="0" text-anchor="middle" font-family="Liberation Sans" font-size="12.50" fill="#262626">Q</text></svg>
<div class="r" style="left:1394px;top:206px;width:1px;height:16px;background:#c8c8c8;"></div>
<svg class="r" style="left:1434.00px;top:218.70px;overflow:visible" width="1" height="1"><text x="0" y="0" text-anchor="middle" font-family="Liberation Sans" font-size="12.50" fill="#262626">R</text></svg>
<div class="r" style="left:1474px;top:206px;width:1px;height:16px;background:#c8c8c8;"></div>
<svg class="r" style="left:1514.00px;top:218.70px;overflow:visible" width="1" height="1"><text x="0" y="0" text-anchor="middle" font-family="Liberation Sans" font-size="12.50" fill="#262626">S</text></svg>
<div class="r" style="left:1554px;top:206px;width:1px;height:16px;background:#c8c8c8;"></div>
<div class="r" style="left:9px;top:222px;width:25px;height:746px;background:#e6e6e6;"></div>
<div class="r" style="left:34px;top:222px;width:1px;height:746px;background:#ababab;"></div>
<div class="r" style="left:9px;top:238px;width:25px;height:1px;background:#c8c8c8;"></div>
<svg class="r" style="left:21.70px;top:235.00px;overflow:visible" width="1" height="1"><text x="0" y="0" text-anchor="middle" font-family="Liberation Sans" font-size="12.30" fill="#262626">25</text></svg>
<div class="r" style="left:9px;top:256px;width:25px;height:1px;background:#c8c8c8;"></div>
<svg class="r" style="left:21.70px;top:253.00px;overflow:visible" width="1" height="1"><text x="0" y="0" text-anchor="middle" font-family="Liberation Sans" font-size="12.30" fill="#262626">26</text></svg>
<div class="r" style="left:9px;top:273px;width:25px;height:1px;background:#c8c8c8;"></div>
<svg class="r" style="left:21.70px;top:270.00px;overflow:visible" width="1" height="1"><text x="0" y="0" text-anchor="middle" font-family="Liberation Sans" font-size="12.30" fill="#262626">27</text></svg>
<div class="r" style="left:9px;top:291px;width:25px;height:1px;background:#c8c8c8;"></div>
<svg class="r" style="left:21.70px;top:288.00px;overflow:visible" width="1" height="1"><text x="0" y="0" text-anchor="middle" font-family="Liberation Sans" font-size="12.30" fill="#262626">28</text></svg>
<div class="r" style="left:9px;top:308px;width:25px;height:1px;background:#c8c8c8;"></div>
<svg class="r" style="left:21.70px;top:305.00px;overflow:visible" width="1" height="1"><text x="0" y="0" text-anchor="middle" font-family="Liberation Sans" font-size="12.30" fill="#262626">29</text></svg>
<div class="r" style="left:9px;top:325px;width:25px;height:1px;background:#c8c8c8;"></div>
<svg class="r" style="left:21.70px;top:322.00px;overflow:visible" width="1" height="1"><text x="0" y="0" text-anchor="middle" font-family="Liberation Sans" font-size="12.30" fill="#262626">30</text></svg>
<div class="r" style="left:9px;top:342px;width:25px;height:1px;background:#c8c8c8;"></div>
<svg class="r" style="left:21.70px;top:339.00px;overflow:visible" width="1" height="1"><text x="0" y="0" text-anchor="middle" font-family="Liberation Sans" font-size="12.30" fill="#262626">31</text></svg>
<div class="r" style="left:9px;top:359px;width:25px;height:1px;background:#c8c8c8;"></div>
<svg class="r" style="left:21.70px;top:356.00px;overflow:visible" width="1" height="1"><text x="0" y="0" text-anchor="middle" font-family="Liberation Sans" font-size="12.30" fill="#262626">32</text></svg>
<div class="r" style="left:9px;top:376px;width:25px;height:1px;background:#c8c8c8;"></div>
<svg class="r" style="left:21.70px;top:373.00px;overflow:visible" width="1" height="1"><text x="0" y="0" text-anchor="middle" font-family="Liberation Sans" font-size="12.30" fill="#262626">33</text></svg>
<div class="r" style="left:9px;top:393px;width:25px;height:1px;background:#c8c8c8;"></div>
<svg class="r" style="left:21.70px;top:390.00px;overflow:visible" width="1" height="1"><text x="0" y="0" text-anchor="middle" font-family="Liberation Sans" font-size="12.30" fill="#262626">34</text></svg>
<div class="r" style="left:9px;top:410px;width:25px;height:1px;background:#c8c8c8;"></div>
<svg class="r" style="left:21.70px;top:407.00px;overflow:visible" width="1" height="1"><text x="0" y="0" text-anchor="middle" font-family="Liberation Sans" font-size="12.30" fill="#262626">35</text></svg>
<div class="r" style="left:9px;top:427px;width:25px;height:1px;background:#c8c8c8;"></div>
<svg class="r" style="left:21.70px;top:424.00px;overflow:visible" width="1" height="1"><text x="0" y="0" text-anchor="middle" font-family="Liberation Sans" font-size="12.30" fill="#262626">36</text></svg>
<div class="r" style="left:9px;top:444px;width:25px;height:1px;background:#c8c8c8;"></div>
<svg class="r" style="left:21.70px;top:441.00px;overflow:visible" width="1" height="1"><text x="0" y="0" text-anchor="middle" font-family="Liberation Sans" font-size="12.30" fill="#262626">37</text></svg>
<div class="r" style="left:9px;top:461px;width:25px;height:1px;background:#c8c8c8;"></div>
<svg class="r" style="left:21.70px;top:458.00px;overflow:visible" width="1" height="1"><text x="0" y="0" text-anchor="middle" font-family="Liberation Sans" font-size="12.30" fill="#262626">38</text></svg>
<div class="r" style="left:9px;top:478px;width:25px;height:1px;background:#c8c8c8;"></div>
<svg class="r" style="left:21.70px;top:475.00px;overflow:visible" width="1" height="1"><text x="0" y="0" text-anchor="middle" font-family="Liberation Sans" font-size="12.30" fill="#262626">39</text></svg>
<div class="r" style="left:9px;top:495px;width:25px;height:1px;background:#c8c8c8;"></div>
<svg class="r" style="left:21.70px;top:492.00px;overflow:visible" width="1" height="1"><text x="0" y="0" text-anchor="middle" font-family="Liberation Sans" font-size="12.30" fill="#262626">40</text></svg>
<div class="r" style="left:9px;top:512px;width:25px;height:1px;background:#c8c8c8;"></div>
<svg class="r" style="left:21.70px;top:509.00px;overflow:visible" width="1" height="1"><text x="0" y="0" text-anchor="middle" font-family="Liberation Sans" font-size="12.30" fill="#262626">41</text></svg>
<div class="r" style="left:9px;top:529px;width:25px;height:1px;background:#c8c8c8;"></div>
<svg class="r" style="left:21.70px;top:526.00px;overflow:visible" width="1" height="1"><text x="0" y="0" text-anchor="middle" font-family="Liberation Sans" font-size="12.30" fill="#262626">42</text></svg>
<div class="r" style="left:9px;top:546px;width:25px;height:1px;background:#c8c8c8;"></div>
<svg class="r" style="left:21.70px;top:543.00px;overflow:visible" width="1" height="1"><text x="0" y="0" text-anchor="middle" font-family="Liberation Sans" font-size="12.30" fill="#262626">43</text></svg>
<div class="r" style="left:9px;top:563px;width:25px;height:1px;background:#c8c8c8;"></div>
<svg class="r" style="left:21.70px;top:560.00px;overflow:visible" width="1" height="1"><text x="0" y="0" text-anchor="middle" font-family="Liberation Sans" font-size="12.30" fill="#262626">44</text></svg>
<div class="r" style="left:9px;top:580px;width:25px;height:1px;background:#c8c8c8;"></div>
<svg class="r" style="left:21.70px;top:577.00px;overflow:visible" width="1" height="1"><text x="0" y="0" text-anchor="middle" font-family="Liberation Sans" font-size="12.30" fill="#262626">45</text></svg>
<div class="r" style="left:9px;top:597px;width:25px;height:1px;background:#c8c8c8;"></div>
<svg class="r" style="left:21.70px;top:594.00px;overflow:visible" width="1" height="1"><text x="0" y="0" text-anchor="middle" font-family="Liberation Sans" font-size="12.30" fill="#262626">46</text></svg>
<div class="r" style="left:9px;top:614px;width:25px;height:1px;background:#c8c8c8;"></div>
<svg class="r" style="left:21.70px;top:611.00px;overflow:visible" width="1" height="1"><text x="0" y="0" text-anchor="middle" font-family="Liberation Sans" font-size="12.30" fill="#262626">47</text></svg>
<div class="r" style="left:9px;top:631px;width:25px;height:1px;background:#c8c8c8;"></div>
<svg class="r" style="left:21.70px;top:628.00px;overflow:visible" width="1" height="1"><text x="0" y="0" text-anchor="middle" font-family="Liberation Sans" font-size="12.30" fill="#262626">48</text></svg>
<div class="r" style="left:9px;top:648px;width:25px;height:1px;background:#c8c8c8;"></div>
<svg class="r" style="left:21.70px;top:645.00px;overflow:visible" width="1" height="1"><text x="0" y="0" text-anchor="middle" font-family="Liberation Sans" font-size="12.30" fill="#262626">49</text></svg>
<div class="r" style="left:9px;top:665px;width:25px;height:1px;background:#c8c8c8;"></div>
<svg class="r" style="left:21.70px;top:662.00px;overflow:visible" width="1" height="1"><text x="0" y="0" text-anchor="middle" font-family="Liberation Sans" font-size="12.30" fill="#262626">50</text></svg>
<div class="r" style="left:9px;top:682px;width:25px;height:1px;background:#c8c8c8;"></div>
<svg class="r" style="left:21.70px;top:679.00px;overflow:visible" width="1" height="1"><text x="0" y="0" text-anchor="middle" font-family="Liberation Sans" font-size="12.30" fill="#262626">51</text></svg>
<div class="r" style="left:9px;top:699px;width:25px;height:1px;background:#c8c8c8;"></div>
<svg class="r" style="left:21.70px;top:696.00px;overflow:visible" width="1" height="1"><text x="0" y="0" text-anchor="middle" font-family="Liberation Sans" font-size="12.30" fill="#262626">52</text></svg>
<div class="r" style="left:9px;top:716px;width:25px;height:1px;background:#c8c8c8;"></div>
<svg class="r" style="left:21.70px;top:713.00px;overflow:visible" width="1" height="1"><text x="0" y="0" text-anchor="middle" font-family="Liberation Sans" font-size="12.30" fill="#262626">53</text></svg>
<div class="r" style="left:9px;top:733px;width:25px;height:1px;background:#c8c8c8;"></div>
<svg class="r" style="left:21.70px;top:730.00px;overflow:visible" width="1" height="1"><text x="0" y="0" text-anchor="middle" font-family="Liberation Sans" font-size="12.30" fill="#262626">54</text></svg>
<div class="r" style="left:9px;top:750px;width:25px;height:1px;background:#c8c8c8;"></div>
<svg class="r" style="left:21.70px;top:747.00px;overflow:visible" width="1" height="1"><text x="0" y="0" text-anchor="middle" font-family="Liberation Sans" font-size="12.30" fill="#262626">55</text></svg>
<div class="r" style="left:9px;top:767px;width:25px;height:1px;background:#c8c8c8;"></div>
<svg class="r" style="left:21.70px;top:764.00px;overflow:visible" width="1" height="1"><text x="0" y="0" text-anchor="middle" font-family="Liberation Sans" font-size="12.30" fill="#262626">56</text></svg>
<div class="r" style="left:9px;top:784px;width:25px;height:1px;background:#c8c8c8;"></div>
<svg class="r" style="left:21.70px;top:781.00px;overflow:visible" width="1" height="1"><text x="0" y="0" text-anchor="middle" font-family="Liberation Sans" font-size="12.30" fill="#262626">57</text></svg>
<div class="r" style="left:9px;top:801px;width:25px;height:1px;background:#c8c8c8;"></div>
<svg class="r" style="left:21.70px;top:798.00px;overflow:visible" width="1" height="1"><text x="0" y="0" text-anchor="middle" font-family="Liberation Sans" font-size="12.30" fill="#262626">58</text></svg>
<div class="r" style="left:9px;top:818px;width:25px;height:1px;background:#c8c8c8;"></div>
<svg class="r" style="left:21.70px;top:815.00px;overflow:visible" width="1" height="1"><text x="0" y="0" text-anchor="middle" font-family="Liberation Sans" font-size="12.30" fill="#262626">59</text></svg>
<div class="r" style="left:9px;top:835px;width:25px;height:1px;background:#c8c8c8;"></div>
<svg class="r" style="left:21.70px;top:832.00px;overflow:visible" width="1" height="1"><text x="0" y="0" text-anchor="middle" font-family="Liberation Sans" font-size="12.30" fill="#262626">60</text></svg>
<div class="r" style="left:9px;top:887px;width:25px;height:1px;background:#c8c8c8;"></div>
<svg class="r" style="left:21.70px;top:884.00px;overflow:visible" width="1" height="1"><text x="0" y="0" text-anchor="middle" font-family="Liberation Sans" font-size="12.30" fill="#262626">61</text></svg>
<div class="r" style="left:9px;top:904px;width:25px;height:1px;background:#c8c8c8;"></div>
<svg class="r" style="left:21.70px;top:901.00px;overflow:visible" width="1" height="1"><text x="0" y="0" text-anchor="middle" font-family="Liberation Sans" font-size="12.30" fill="#262626">62</text></svg>
<div class="r" style="left:9px;top:922px;width:25px;height:1px;background:#c8c8c8;"></div>
<svg class="r" style="left:21.70px;top:919.00px;overflow:visible" width="1" height="1"><text x="0" y="0" text-anchor="middle" font-family="Liberation Sans" font-size="12.30" fill="#262626">63</text></svg>
<div class="r" style="left:9px;top:939px;width:25px;height:1px;background:#c8c8c8;"></div>
<svg class="r" style="left:21.70px;top:936.00px;overflow:visible" width="1" height="1"><text x="0" y="0" text-anchor="middle" font-family="Liberation Sans" font-size="12.30" fill="#262626">64</text></svg>
<div class="r" style="left:9px;top:956px;width:25px;height:1px;background:#c8c8c8;"></div>
<svg class="r" style="left:21.70px;top:953.00px;overflow:visible" width="1" height="1"><text x="0" y="0" text-anchor="middle" font-family="Liberation Sans" font-size="12.30" fill="#262626">65</text></svg>
<div class="r" style="left:9px;top:973px;width:25px;height:1px;background:#c8c8c8;"></div>
<svg class="r" style="left:21.70px;top:970.00px;overflow:visible" width="1" height="1"><text x="0" y="0" text-anchor="middle" font-family="Liberation Sans" font-size="12.30" fill="#262626">66</text></svg>
<div class="r" style="left:35px;top:223px;width:1532px;height:745px;background:#fff;"></div>
<div class="r" style="left:1567px;top:222px;width:1px;height:746px;background:#a0a0a0;"></div>
<div class="r" style="left:1568px;top:222px;width:21px;height:746px;background:#e6e6e6;"></div>
<div class="r" style="left:1571px;top:222px;width:15px;height:746px;background:#dcdcdc;"></div>
<div class="r" style="left:1571px;top:208px;width:15px;height:15px;background:#fff;box-sizing:border-box;border:1px solid #ababab;"></div>
<svg class="r" style="left:1574px;top:213px;" width="9" height="5" viewBox="0 0 9 5"><path d="M0 4.5h8L4 0z" fill="#777"/></svg>
<div class="r" style="left:1571px;top:493px;width:15px;height:461px;background:#fff;box-sizing:border-box;border:1px solid #ababab;"></div>
<div class="r" style="left:1571px;top:954px;width:15px;height:14px;background:#fff;box-sizing:border-box;border:1px solid #ababab;"></div>
<svg class="r" style="left:1574px;top:959px;" width="9" height="5" viewBox="0 0 9 5"><path d="M0 0h8L4 4.5z" fill="#777"/></svg>
<div class="r" style="left:274px;top:223px;width:80px;height:69px;background:#efedf6;"></div>
<div class="r" style="left:354px;top:223px;width:320px;height:69px;background:#e8eef8;"></div>
<svg class="r" style="left:314.00px;top:235.80px;overflow:visible" width="1" height="1"><text x="0" y="0" text-anchor="middle" font-family="Liberation Sans" font-size="12.70" fill="#000">1920x1080</text></svg>
<svg class="r" style="left:394.00px;top:235.80px;overflow:visible" width="1" height="1"><text x="0" y="0" text-anchor="middle" font-family="Liberation Sans" font-size="12.70" fill="#000">30,81</text></svg>
<svg class="r" style="left:474.00px;top:235.80px;overflow:visible" width="1" height="1"><text x="0" y="0" text-anchor="middle" font-family="Liberation Sans" font-size="12.70" fill="#000">37,9</text></svg>
<svg class="r" style="left:554.00px;top:235.80px;overflow:visible" width="1" height="1"><text x="0" y="0" text-anchor="middle" font-family="Liberation Sans" font-size="12.70" fill="#000">47,25</text></svg>
<svg class="r" style="left:634.00px;top:235.80px;overflow:visible" width="1" height="1"><text x="0" y="0" text-anchor="middle" font-family="Liberation Sans" font-size="12.70" fill="#000">50,23</text></svg>
<svg class="r" style="left:1034.00px;top:235.80px;overflow:visible" width="1" height="1"><text x="0" y="0" text-anchor="middle" font-family="Liberation Sans" font-size="12.70" fill="#000">64,2</text></svg>
<svg class="r" style="left:1114.00px;top:235.80px;overflow:visible" width="1" height="1"><text x="0" y="0" text-anchor="middle" font-family="Liberation Sans" font-size="12.70" fill="#000">38,98</text></svg>
<svg class="r" style="left:1194.00px;top:235.80px;overflow:visible" width="1" height="1"><text x="0" y="0" text-anchor="middle" font-family="Liberation Sans" font-size="12.70" fill="#000">44,22</text></svg>
<svg class="r" style="left:1274.00px;top:235.80px;overflow:visible" width="1" height="1"><text x="0" y="0" text-anchor="middle" font-family="Liberation Sans" font-size="12.70" fill="#000">57,73</text></svg>
<svg class="r" style="left:1354.00px;top:235.80px;overflow:visible" width="1" height="1"><text x="0" y="0" text-anchor="middle" font-family="Liberation Sans" font-size="12.70" fill="#000">71,61</text></svg>
<svg class="r" style="left:314.00px;top:252.30px;overflow:visible" width="1" height="1"><text x="0" y="0" text-anchor="middle" font-family="Liberation Sans" font-size="12.70" fill="#000">2560x1600</text></svg>
<svg class="r" style="left:394.00px;top:252.30px;overflow:visible" width="1" height="1"><text x="0" y="0" text-anchor="middle" font-family="Liberation Sans" font-size="12.70" fill="#000">12,5</text></svg>
<svg class="r" style="left:474.00px;top:252.30px;overflow:visible" width="1" height="1"><text x="0" y="0" text-anchor="middle" font-family="Liberation Sans" font-size="12.70" fill="#000">15,1</text></svg>
<svg class="r" style="left:554.00px;top:252.30px;overflow:visible" width="1" height="1"><text x="0" y="0" text-anchor="middle" font-family="Liberation Sans" font-size="12.70" fill="#000">29,23</text></svg>
<svg class="r" style="left:634.00px;top:252.30px;overflow:visible" width="1" height="1"><text x="0" y="0" text-anchor="middle" font-family="Liberation Sans" font-size="12.70" fill="#000">32,5</text></svg>
<svg class="r" style="left:1034.00px;top:252.30px;overflow:visible" width="1" height="1"><text x="0" y="0" text-anchor="middle" font-family="Liberation Sans" font-size="12.70" fill="#000">41,3</text></svg>
<svg class="r" style="left:1114.00px;top:252.30px;overflow:visible" width="1" height="1"><text x="0" y="0" text-anchor="middle" font-family="Liberation Sans" font-size="12.70" fill="#000">23,32</text></svg>
<svg class="r" style="left:1194.00px;top:252.30px;overflow:visible" width="1" height="1"><text x="0" y="0" text-anchor="middle" font-family="Liberation Sans" font-size="12.70" fill="#000">27,4</text></svg>
<svg class="r" style="left:1274.00px;top:252.30px;overflow:visible" width="1" height="1"><text x="0" y="0" text-anchor="middle" font-family="Liberation Sans" font-size="12.70" fill="#000">35,58</text></svg>
<svg class="r" style="left:1354.00px;top:252.30px;overflow:visible" width="1" height="1"><text x="0" y="0" text-anchor="middle" font-family="Liberation Sans" font-size="12.70" fill="#000">42,92</text></svg>
<svg class="r" style="left:314.00px;top:270.80px;overflow:visible" width="1" height="1"><text x="0" y="0" text-anchor="middle" font-family="Liberation Sans" font-size="12.70" fill="#000">1920x1080</text></svg>
<svg class="r" style="left:394.00px;top:270.80px;overflow:visible" width="1" height="1"><text x="0" y="0" text-anchor="middle" font-family="Liberation Sans" font-size="12.70" fill="#000">22</text></svg>
<svg class="r" style="left:474.00px;top:270.80px;overflow:visible" width="1" height="1"><text x="0" y="0" text-anchor="middle" font-family="Liberation Sans" font-size="12.70" fill="#000">28,5</text></svg>
<svg class="r" style="left:554.00px;top:270.80px;overflow:visible" width="1" height="1"><text x="0" y="0" text-anchor="middle" font-family="Liberation Sans" font-size="12.70" fill="#000">33,2</text></svg>
<svg class="r" style="left:634.00px;top:270.80px;overflow:visible" width="1" height="1"><text x="0" y="0" text-anchor="middle" font-family="Liberation Sans" font-size="12.70" fill="#000">39,6</text></svg>
<svg class="r" style="left:1034.00px;top:270.80px;overflow:visible" width="1" height="1"><text x="0" y="0" text-anchor="middle" font-family="Liberation Sans" font-size="12.70" fill="#000">51,4</text></svg>
<svg class="r" style="left:1114.00px;top:270.80px;overflow:visible" width="1" height="1"><text x="0" y="0" text-anchor="middle" font-family="Liberation Sans" font-size="12.70" fill="#000">30,4</text></svg>
<svg class="r" style="left:1194.00px;top:270.80px;overflow:visible" width="1" height="1"><text x="0" y="0" text-anchor="middle" font-family="Liberation Sans" font-size="12.70" fill="#000">33,9</text></svg>
<svg class="r" style="left:1274.00px;top:270.80px;overflow:visible" width="1" height="1"><text x="0" y="0" text-anchor="middle" font-family="Liberation Sans" font-size="12.70" fill="#000">43,2</text></svg>
<svg class="r" style="left:1354.00px;top:270.80px;overflow:visible" width="1" height="1"><text x="0" y="0" text-anchor="middle" font-family="Liberation Sans" font-size="12.70" fill="#000">52,6</text></svg>
<svg class="r" style="left:314.00px;top:287.70px;overflow:visible" width="1" height="1"><text x="0" y="0" text-anchor="middle" font-family="Liberation Sans" font-size="12.70" fill="#000">2560x1600</text></svg>
<svg class="r" style="left:394.00px;top:287.70px;overflow:visible" width="1" height="1"><text x="0" y="0" text-anchor="middle" font-family="Liberation Sans" font-size="12.70" fill="#000">10,1</text></svg>
<svg class="r" style="left:474.00px;top:287.70px;overflow:visible" width="1" height="1"><text x="0" y="0" text-anchor="middle" font-family="Liberation Sans" font-size="12.70" fill="#000">13,5</text></svg>
<svg class="r" style="left:554.00px;top:287.70px;overflow:visible" width="1" height="1"><text x="0" y="0" text-anchor="middle" font-family="Liberation Sans" font-size="12.70" fill="#000">16,7</text></svg>
<svg class="r" style="left:634.00px;top:287.70px;overflow:visible" width="1" height="1"><text x="0" y="0" text-anchor="middle" font-family="Liberation Sans" font-size="12.70" fill="#000">21,1</text></svg>
<svg class="r" style="left:1034.00px;top:287.70px;overflow:visible" width="1" height="1"><text x="0" y="0" text-anchor="middle" font-family="Liberation Sans" font-size="12.70" fill="#000">27,7</text></svg>
<svg class="r" style="left:1114.00px;top:287.70px;overflow:visible" width="1" height="1"><text x="0" y="0" text-anchor="middle" font-family="Liberation Sans" font-size="12.70" fill="#000">15,7</text></svg>
<svg class="r" style="left:1194.00px;top:287.70px;overflow:visible" width="1" height="1"><text x="0" y="0" text-anchor="middle" font-family="Liberation Sans" font-size="12.70" fill="#000">17,4</text></svg>
<svg class="r" style="left:1274.00px;top:287.70px;overflow:visible" width="1" height="1"><text x="0" y="0" text-anchor="middle" font-family="Liberation Sans" font-size="12.70" fill="#000">22,4</text></svg>
<svg class="r" style="left:1354.00px;top:287.70px;overflow:visible" width="1" height="1"><text x="0" y="0" text-anchor="middle" font-family="Liberation Sans" font-size="12.70" fill="#000">27,2</text></svg>
<svg class="r" style="left:197.00px;top:235.50px;overflow:visible" width="1" height="1"><text x="0" y="0" text-anchor="start" font-family="Liberation Sans" font-size="12.70" fill="#000">Battlefield 3</text></svg>
<svg class="r" style="left:197.00px;top:270.80px;overflow:visible" width="1" height="1"><text x="0" y="0" text-anchor="start" font-family="Liberation Sans" font-size="12.70" fill="#000">Unigine 4,0</text></svg>
<div class="r" style="left:194px;top:223px;width:1px;height:69px;background:#000;"></div>
<div class="r" style="left:274px;top:223px;width:1px;height:69px;background:#000;"></div>
<div class="r" style="left:354px;top:223px;width:1px;height:69px;background:#000;"></div>
<div class="r" style="left:434px;top:223px;width:1px;height:69px;background:#000;"></div>
<div class="r" style="left:514px;top:223px;width:1px;height:69px;background:#000;"></div>
<div class="r" style="left:594px;top:223px;width:1px;height:69px;background:#000;"></div>
<div class="r" style="left:674px;top:223px;width:1px;height:69px;background:#000;"></div>
<div class="r" style="left:754px;top:223px;width:1px;height:69px;background:#000;"></div>
<div class="r" style="left:834px;top:223px;width:1px;height:69px;background:#000;"></div>
<div class="r" style="left:914px;top:223px;width:1px;height:69px;background:#000;"></div>
<div class="r" style="left:994px;top:223px;width:1px;height:69px;background:#000;"></div>
<div class="r" style="left:1074px;top:223px;width:1px;height:69px;background:#000;"></div>
<div class="r" style="left:1154px;top:223px;width:1px;height:69px;background:#000;"></div>
<div class="r" style="left:1234px;top:223px;width:1px;height:69px;background:#000;"></div>
<div class="r" style="left:1314px;top:223px;width:1px;height:69px;background:#000;"></div>
<div class="r" style="left:1394px;top:223px;width:1px;height:69px;background:#000;"></div>
<div class="r" style="left:274px;top:239px;width:1120px;height:1px;background-image:linear-gradient(to right,#000 50%,transparent 50%);background-size:2px 1px;"></div>
<div class="r" style="left:274px;top:274px;width:1120px;height:1px;background-image:linear-gradient(to right,#000 50%,transparent 50%);background-size:2px 1px;"></div>
<div class="r" style="left:194px;top:256px;width:1201px;height:2px;background:#000;"></div>
<div class="r" style="left:194px;top:291px;width:1201px;height:2px;background:#000;"></div>
<div class="r" style="left:274px;top:223px;width:2px;height:70px;background:#7e5fc0;"></div>
<div class="r" style="left:354px;top:223px;width:2px;height:70px;background:#7e5fc0;"></div>
<div class="r" style="left:276px;top:292px;width:76px;height:2px;background:#7e5fc0;"></div>
<div class="r" style="left:272px;top:290px;width:5px;height:5px;background:#7e5fc0;"></div>
<div class="r" style="left:353px;top:290px;width:5px;height:5px;background:#7e5fc0;"></div>
<div class="r" style="left:674px;top:223px;width:2px;height:70px;background:#2f75cf;"></div>
<div class="r" style="left:358px;top:292px;width:316px;height:2px;background:#2f75cf;"></div>
<div class="r" style="left:672px;top:290px;width:5px;height:5px;background:#2f75cf;"></div>
<div class="r" style="left:274px;top:836px;width:1041px;height:52px;background:#000;"></div>
<div class="t" style="left:274px;width:80px;text-align:center;top:846.4px;font-size:13.2px;line-height:16.8px;color:#fff;font-weight:bold;">Radeon HD<br>7790</div>
<div class="t" style="left:354px;width:80px;text-align:center;top:846.4px;font-size:13.2px;line-height:16.8px;color:#fff;font-weight:bold;">Radeon HD<br>7850 - 1 Go</div>
<div class="t" style="left:434px;width:80px;text-align:center;top:838.0px;font-size:13.2px;line-height:16.8px;color:#fff;font-weight:bold;">Radeon HD<br>7870 GHz<br>Edition</div>
<div class="t" style="left:514px;width:80px;text-align:center;top:846.4px;font-size:13.2px;line-height:16.8px;color:#fff;font-weight:bold;">Radeon HD<br>7950</div>
<div class="t" style="left:594px;width:80px;text-align:center;top:846.4px;font-size:13.2px;line-height:16.8px;color:#fff;font-weight:bold;">Radeon HD<br>7970</div>
<div class="t" style="left:674px;width:80px;text-align:center;top:838.0px;font-size:13.2px;line-height:16.8px;color:#fff;font-weight:bold;">Radeon HD<br>7970 GHz<br>Edition</div>
<div class="t" style="left:754px;width:80px;text-align:center;top:846.4px;font-size:13.2px;line-height:16.8px;color:#fff;font-weight:bold;">Radeon R7<br>260X</div>
<div class="t" style="left:834px;width:80px;text-align:center;top:846.4px;font-size:13.2px;line-height:16.8px;color:#fff;font-weight:bold;">Radeon R9<br>270X</div>
<div class="t" style="left:914px;width:80px;text-align:center;top:846.4px;font-size:13.2px;line-height:16.8px;color:#fff;font-weight:bold;">Radeon R9<br>280X</div>
<div class="t" style="left:994px;width:80px;text-align:center;top:838.0px;font-size:13.2px;line-height:16.8px;color:#fff;font-weight:bold;">GeForce<br>GTX 650 Ti<br>Boost</div>
<div class="t" style="left:1074px;width:80px;text-align:center;top:846.4px;font-size:13.2px;line-height:16.8px;color:#fff;font-weight:bold;">GeForce<br>GTX 660</div>
<div class="t" style="left:1154px;width:80px;text-align:center;top:846.4px;font-size:13.2px;line-height:16.8px;color:#fff;font-weight:bold;">GeForce<br>GTX 760</div>
<div class="t" style="left:1234px;width:80px;text-align:center;top:846.4px;font-size:13.2px;line-height:16.8px;color:#fff;font-weight:bold;">GeForce<br>GTX 770</div>
<svg class="r" style="left:234.00px;top:902.00px;overflow:visible" width="1" height="1"><text x="0" y="0" text-anchor="middle" font-family="Liberation Sans" font-size="12.70" fill="#000">IDLE</text></svg>
<svg class="r" style="left:314.00px;top:902.00px;overflow:visible" width="1" height="1"><text x="0" y="0" text-anchor="middle" font-family="Liberation Sans" font-size="12.70" fill="#000">98</text></svg>
<svg class="r" style="left:394.00px;top:902.00px;overflow:visible" width="1" height="1"><text x="0" y="0" text-anchor="middle" font-family="Liberation Sans" font-size="12.70" fill="#000">105</text></svg>
<svg class="r" style="left:474.00px;top:902.00px;overflow:visible" width="1" height="1"><text x="0" y="0" text-anchor="middle" font-family="Liberation Sans" font-size="12.70" fill="#000">101</text></svg>
<svg class="r" style="left:554.00px;top:902.00px;overflow:visible" width="1" height="1"><text x="0" y="0" text-anchor="middle" font-family="Liberation Sans" font-size="12.70" fill="#000">108</text></svg>
<svg class="r" style="left:634.00px;top:902.00px;overflow:visible" width="1" height="1"><text x="0" y="0" text-anchor="middle" font-family="Liberation Sans" font-size="12.70" fill="#000">104</text></svg>
<svg class="r" style="left:714.00px;top:902.00px;overflow:visible" width="1" height="1"><text x="0" y="0" text-anchor="middle" font-family="Liberation Sans" font-size="12.70" fill="#000">107</text></svg>
<svg class="r" style="left:794.00px;top:902.00px;overflow:visible" width="1" height="1"><text x="0" y="0" text-anchor="middle" font-family="Liberation Sans" font-size="12.70" fill="#000">97</text></svg>
<svg class="r" style="left:874.00px;top:902.00px;overflow:visible" width="1" height="1"><text x="0" y="0" text-anchor="middle" font-family="Liberation Sans" font-size="12.70" fill="#000">103</text></svg>
<svg class="r" style="left:954.00px;top:902.00px;overflow:visible" width="1" height="1"><text x="0" y="0" text-anchor="middle" font-family="Liberation Sans" font-size="12.70" fill="#000">108</text></svg>
<svg class="r" style="left:1034.00px;top:902.00px;overflow:visible" width="1" height="1"><text x="0" y="0" text-anchor="middle" font-family="Liberation Sans" font-size="12.70" fill="#000">99</text></svg>
<svg class="r" style="left:1114.00px;top:902.00px;overflow:visible" width="1" height="1"><text x="0" y="0" text-anchor="middle" font-family="Liberation Sans" font-size="12.70" fill="#000">98</text></svg>
<svg class="r" style="left:1194.00px;top:902.00px;overflow:visible" width="1" height="1"><text x="0" y="0" text-anchor="middle" font-family="Liberation Sans" font-size="12.70" fill="#000">103</text></svg>
<svg class="r" style="left:1274.00px;top:902.00px;overflow:visible" width="1" height="1"><text x="0" y="0" text-anchor="middle" font-family="Liberation Sans" font-size="12.70" fill="#000">101</text></svg>
<svg class="r" style="left:234.00px;top:919.00px;overflow:visible" width="1" height="1"><text x="0" y="0" text-anchor="middle" font-family="Liberation Sans" font-size="12.70" fill="#000">MAX</text></svg>
<svg class="r" style="left:314.00px;top:919.00px;overflow:visible" width="1" height="1"><text x="0" y="0" text-anchor="middle" font-family="Liberation Sans" font-size="12.70" fill="#000">202</text></svg>
<svg class="r" style="left:394.00px;top:919.00px;overflow:visible" width="1" height="1"><text x="0" y="0" text-anchor="middle" font-family="Liberation Sans" font-size="12.70" fill="#000">225</text></svg>
<svg class="r" style="left:474.00px;top:919.00px;overflow:visible" width="1" height="1"><text x="0" y="0" text-anchor="middle" font-family="Liberation Sans" font-size="12.70" fill="#000">236</text></svg>
<svg class="r" style="left:554.00px;top:919.00px;overflow:visible" width="1" height="1"><text x="0" y="0" text-anchor="middle" font-family="Liberation Sans" font-size="12.70" fill="#000">256</text></svg>
<svg class="r" style="left:634.00px;top:919.00px;overflow:visible" width="1" height="1"><text x="0" y="0" text-anchor="middle" font-family="Liberation Sans" font-size="12.70" fill="#000">294</text></svg>
<svg class="r" style="left:714.00px;top:919.00px;overflow:visible" width="1" height="1"><text x="0" y="0" text-anchor="middle" font-family="Liberation Sans" font-size="12.70" fill="#000">376</text></svg>
<svg class="r" style="left:794.00px;top:919.00px;overflow:visible" width="1" height="1"><text x="0" y="0" text-anchor="middle" font-family="Liberation Sans" font-size="12.70" fill="#000">225</text></svg>
<svg class="r" style="left:874.00px;top:919.00px;overflow:visible" width="1" height="1"><text x="0" y="0" text-anchor="middle" font-family="Liberation Sans" font-size="12.70" fill="#000">258</text></svg>
<svg class="r" style="left:954.00px;top:919.00px;overflow:visible" width="1" height="1"><text x="0" y="0" text-anchor="middle" font-family="Liberation Sans" font-size="12.70" fill="#000">325</text></svg>
<svg class="r" style="left:1034.00px;top:919.00px;overflow:visible" width="1" height="1"><text x="0" y="0" text-anchor="middle" font-family="Liberation Sans" font-size="12.70" fill="#000">269</text></svg>
<svg class="r" style="left:1114.00px;top:919.00px;overflow:visible" width="1" height="1"><text x="0" y="0" text-anchor="middle" font-family="Liberation Sans" font-size="12.70" fill="#000">278</text></svg>
<svg class="r" style="left:1194.00px;top:919.00px;overflow:visible" width="1" height="1"><text x="0" y="0" text-anchor="middle" font-family="Liberation Sans" font-size="12.70" fill="#000">342</text></svg>
<svg class="r" style="left:1274.00px;top:919.00px;overflow:visible" width="1" height="1"><text x="0" y="0" text-anchor="middle" font-family="Liberation Sans" font-size="12.70" fill="#000">381</text></svg>
<div class="r" style="left:194px;top:887px;width:1121px;height:2px;background:#000;"></div>
<div class="r" style="left:194px;top:922px;width:1122px;height:2px;background:#000;"></div>
<div class="r" style="left:194px;top:887px;width:2px;height:36px;background:#000;"></div>
<div class="r" style="left:1313px;top:836px;width:2px;height:87px;background:#000;"></div>
<div class="r" style="left:274px;top:888px;width:1px;height:35px;background:#000;"></div>
<div class="r" style="left:354px;top:888px;width:1px;height:35px;background:#000;"></div>
<div class="r" style="left:434px;top:888px;width:1px;height:35px;background:#000;"></div>
<div class="r" style="left:514px;top:888px;width:1px;height:35px;background:#000;"></div>
<div class="r" style="left:594px;top:888px;width:1px;height:35px;background:#000;"></div>
<div class="r" style="left:674px;top:888px;width:1px;height:35px;background:#000;"></div>
<div class="r" style="left:754px;top:888px;width:1px;height:35px;background:#000;"></div>
<div class="r" style="left:834px;top:888px;width:1px;height:35px;background:#000;"></div>
<div class="r" style="left:914px;top:888px;width:1px;height:35px;background:#000;"></div>
<div class="r" style="left:994px;top:888px;width:1px;height:35px;background:#000;"></div>
<div class="r" style="left:1074px;top:888px;width:1px;height:35px;background:#000;"></div>
<div class="r" style="left:1154px;top:888px;width:1px;height:35px;background:#000;"></div>
<div class="r" style="left:1234px;top:888px;width:1px;height:35px;background:#000;"></div>
<div class="r" style="left:194px;top:905px;width:1120px;height:1px;background-image:linear-gradient(to right,#000 50%,transparent 50%);background-size:2px 1px;"></div>
<svg class="r" style="left:96px;top:316px;" width="691" height="494" viewBox="0 0 691 494"><defs><radialGradient id="cbg" cx="345" cy="25" r="380" gradientUnits="userSpaceOnUse" gradientTransform="translate(345 25) scale(1 2.0) translate(-345 -25)"><stop offset="0" stop-color="#f9f9f9"/><stop offset="0.45" stop-color="#e4e4e4"/><stop offset="0.8" stop-color="#d3d3d3"/><stop offset="1" stop-color="#c5c5c5"/></radialGradient></defs><rect x="0.5" y="0.5" width="690" height="493" fill="url(#cbg)" stroke="#9a9a9a" stroke-width="1.2"/><text x="345" y="28.69999999999999" text-anchor="middle" font-family="Liberation Sans" font-weight="bold" font-size="20.9" fill="#404040">Titre du graphique</text><rect x="243" y="41" width="205" height="33" fill="#ffffff" opacity="0.18"/><rect x="255" y="53.19999999999999" width="8.3" height="8.5" fill="#6a93c2"/><text x="269" y="61.5" font-family="Liberation Sans" font-size="11.08" fill="#404040">Augmenter</text><rect x="334" y="53.19999999999999" width="8.3" height="8.5" fill="#d06262"/><text x="348.4" y="61.5" font-family="Liberation Sans" font-size="11.15" fill="#404040">Diminuer</text><rect x="404" y="53.19999999999999" width="8.3" height="8.5" fill="#a4c46e"/><text x="418.20000000000005" y="61.5" font-family="Liberation Sans" font-size="10.70" fill="#404040">Total</text><rect x="40.5" y="389.19" width="641.0" height="1" fill="#000" opacity="0.214"/><rect x="40.5" y="350.63" width="641.0" height="1" fill="#000" opacity="0.196"/><rect x="40.5" y="312.08" width="641.0" height="1" fill="#000" opacity="0.178"/><rect x="40.5" y="273.52" width="641.0" height="1" fill="#000" opacity="0.160"/><rect x="40.5" y="234.97" width="641.0" height="1" fill="#000" opacity="0.142"/><rect x="40.5" y="196.41" width="641.0" height="1" fill="#000" opacity="0.124"/><rect x="40.5" y="157.86" width="641.0" height="1" fill="#000" opacity="0.106"/><rect x="40.5" y="119.30" width="641.0" height="1" fill="#000" opacity="0.088"/><rect x="40.5" y="80.75" width="641.0" height="1" fill="#000" opacity="0.070"/><text x="58.31" y="423.55" text-anchor="middle" font-family="Liberation Sans" font-weight="bold" font-size="10.7" fill="#000">23,23</text><text x="59.81" y="447.60" text-anchor="end" transform="rotate(-30 59.81 447.60)" font-family="Liberation Sans" font-size="10.6" fill="#454545">1920x1080</text><rect x="79.92" y="426.16" width="28" height="1.10" fill="#6b94be"/><text x="93.92" y="422.86" text-anchor="middle" font-family="Liberation Sans" font-weight="bold" font-size="10.7" fill="#000">8,9</text><text x="95.42" y="447.60" text-anchor="end" transform="rotate(-30 95.42 447.60)" font-family="Liberation Sans" font-size="10.6" fill="#454545">2560x1600</text><rect x="115.53" y="422.59" width="28" height="2.77" fill="#6b94be"/><text x="129.53" y="419.29" text-anchor="middle" font-family="Liberation Sans" font-weight="bold" font-size="10.7" fill="#000">46,3</text><text x="131.03" y="447.60" text-anchor="end" transform="rotate(-30 131.03 447.60)" font-family="Liberation Sans" font-size="10.6" fill="#454545">1920x1080</text><rect x="151.14" y="420.20" width="28" height="1.59" fill="#6b94be"/><text x="165.14" y="416.90" text-anchor="middle" font-family="Liberation Sans" font-weight="bold" font-size="10.7" fill="#000">31,04</text><text x="166.64" y="447.60" text-anchor="end" transform="rotate(-30 166.64 447.60)" font-family="Liberation Sans" font-size="10.6" fill="#454545">2560x1600</text><rect x="186.75" y="214.08" width="28" height="205.32" fill="#6b94be"/><text x="200.75" y="210.78" text-anchor="middle" font-family="Liberation Sans" font-weight="bold" font-size="10.7" fill="#000">2673</text><text x="202.25" y="447.60" text-anchor="end" transform="rotate(-30 202.25 447.60)" font-family="Liberation Sans" font-size="10.6" fill="#454545">1920x1080</text><rect x="222.36" y="137.74" width="28" height="75.54" fill="#6b94be"/><text x="236.36" y="134.44" text-anchor="middle" font-family="Liberation Sans" font-weight="bold" font-size="10.7" fill="#000">990</text><text x="237.86" y="447.60" text-anchor="end" transform="rotate(-30 237.86 447.60)" font-family="Liberation Sans" font-size="10.6" fill="#454545">2560x1600</text><rect x="257.97" y="132.89" width="28" height="4.06" fill="#6b94be"/><text x="271.97" y="129.59" text-anchor="middle" font-family="Liberation Sans" font-weight="bold" font-size="10.7" fill="#000">63</text><text x="273.47" y="447.60" text-anchor="end" transform="rotate(-30 273.47 447.60)" font-family="Liberation Sans" font-size="10.6" fill="#454545">1920x1080</text><rect x="293.58" y="130.27" width="28" height="1.82" fill="#6b94be"/><text x="307.58" y="126.97" text-anchor="middle" font-family="Liberation Sans" font-weight="bold" font-size="10.7" fill="#000">34</text><text x="309.08" y="447.60" text-anchor="end" transform="rotate(-30 309.08 447.60)" font-family="Liberation Sans" font-size="10.6" fill="#454545">2560x1600</text><rect x="329.19" y="128.35" width="28" height="1.11" fill="#6b94be"/><text x="343.19" y="125.05" text-anchor="middle" font-family="Liberation Sans" font-weight="bold" font-size="10.7" fill="#000">24,83</text><text x="344.69" y="447.60" text-anchor="end" transform="rotate(-30 344.69 447.60)" font-family="Liberation Sans" font-size="10.6" fill="#454545">1920x1080</text><rect x="364.81" y="127.73" width="28" height="1.10" fill="#6b94be"/><text x="378.81" y="124.43" text-anchor="middle" font-family="Liberation Sans" font-weight="bold" font-size="10.7" fill="#000">8,06</text><text x="380.31" y="447.60" text-anchor="end" transform="rotate(-30 380.31 447.60)" font-family="Liberation Sans" font-size="10.6" fill="#454545">2560x1600</text><rect x="400.42" y="125.14" width="28" height="1.79" fill="#6b94be"/><text x="414.42" y="121.84" text-anchor="middle" font-family="Liberation Sans" font-weight="bold" font-size="10.7" fill="#000">33,55</text><text x="415.92" y="447.60" text-anchor="end" transform="rotate(-30 415.92 447.60)" font-family="Liberation Sans" font-size="10.6" fill="#454545">1920x1080</text><rect x="436.03" y="123.73" width="28" height="1.10" fill="#6b94be"/><text x="450.03" y="120.43" text-anchor="middle" font-family="Liberation Sans" font-weight="bold" font-size="10.7" fill="#000">18,32</text><text x="451.53" y="447.60" text-anchor="end" transform="rotate(-30 451.53 447.60)" font-family="Liberation Sans" font-size="10.6" fill="#454545">2560x1600</text><rect x="471.64" y="121.97" width="28" height="1.10" fill="#6b94be"/><text x="485.64" y="118.67" text-anchor="middle" font-family="Liberation Sans" font-weight="bold" font-size="10.7" fill="#000">22,78</text><text x="487.14" y="447.60" text-anchor="end" transform="rotate(-30 487.14 447.60)" font-family="Liberation Sans" font-size="10.6" fill="#454545">1920x1080</text><rect x="507.25" y="120.98" width="28" height="1.10" fill="#6b94be"/><text x="521.25" y="117.68" text-anchor="middle" font-family="Liberation Sans" font-weight="bold" font-size="10.7" fill="#000">12,85</text><text x="522.75" y="447.60" text-anchor="end" transform="rotate(-30 522.75 447.60)" font-family="Liberation Sans" font-size="10.6" fill="#454545">2560x1600</text><rect x="542.86" y="118.61" width="28" height="1.58" fill="#6b94be"/><text x="556.86" y="115.31" text-anchor="middle" font-family="Liberation Sans" font-weight="bold" font-size="10.7" fill="#000">30,81</text><text x="558.36" y="447.60" text-anchor="end" transform="rotate(-30 558.36 447.60)" font-family="Liberation Sans" font-size="10.6" fill="#454545">1920x1080</text><rect x="578.47" y="117.64" width="28" height="1.10" fill="#6b94be"/><text x="592.47" y="114.34" text-anchor="middle" font-family="Liberation Sans" font-weight="bold" font-size="10.7" fill="#000">12,5</text><text x="593.97" y="447.60" text-anchor="end" transform="rotate(-30 593.97 447.60)" font-family="Liberation Sans" font-size="10.6" fill="#454545">2560x1600</text><rect x="614.08" y="115.95" width="28" height="1.10" fill="#6b94be"/><text x="628.08" y="112.65" text-anchor="middle" font-family="Liberation Sans" font-weight="bold" font-size="10.7" fill="#000">22</text><text x="629.58" y="447.60" text-anchor="end" transform="rotate(-30 629.58 447.60)" font-family="Liberation Sans" font-size="10.6" fill="#454545">1920x1080</text><rect x="649.69" y="115.17" width="28" height="1.10" fill="#6b94be"/><text x="663.69" y="111.87" text-anchor="middle" font-family="Liberation Sans" font-weight="bold" font-size="10.7" fill="#000">10,1</text><text x="665.19" y="447.60" text-anchor="end" transform="rotate(-30 665.19 447.60)" font-family="Liberation Sans" font-size="10.6" fill="#454545">2560x1600</text><rect x="40.5" y="427" width="641.0" height="2" fill="#3a3a3a"/></svg>
<svg class="r" style="left:90px;top:310px;" width="12" height="12" viewBox="0 0 12 12"><circle cx="6" cy="6" r="4.6" fill="#fff" stroke="#8c8c8c" stroke-width="1.2"/></svg>
<svg class="r" style="left:90px;top:556px;" width="12" height="12" viewBox="0 0 12 12"><circle cx="6" cy="6" r="4.6" fill="#fff" stroke="#8c8c8c" stroke-width="1.2"/></svg>
<svg class="r" style="left:90px;top:803px;" width="12" height="12" viewBox="0 0 12 12"><circle cx="6" cy="6" r="4.6" fill="#fff" stroke="#8c8c8c" stroke-width="1.2"/></svg>
<svg class="r" style="left:435px;top:310px;" width="12" height="12" viewBox="0 0 12 12"><circle cx="6" cy="6" r="4.6" fill="#fff" stroke="#8c8c8c" stroke-width="1.2"/></svg>
<svg class="r" style="left:435px;top:803px;" width="12" height="12" viewBox="0 0 12 12"><circle cx="6" cy="6" r="4.6" fill="#fff" stroke="#8c8c8c" stroke-width="1.2"/></svg>
<svg class="r" style="left:780px;top:310px;" width="12" height="12" viewBox="0 0 12 12"><circle cx="6" cy="6" r="4.6" fill="#fff" stroke="#8c8c8c" stroke-width="1.2"/></svg>
<svg class="r" style="left:780px;top:556px;" width="12" height="12" viewBox="0 0 12 12"><circle cx="6" cy="6" r="4.6" fill="#fff" stroke="#8c8c8c" stroke-width="1.2"/></svg>
<svg class="r" style="left:780px;top:803px;" width="12" height="12" viewBox="0 0 12 12"><circle cx="6" cy="6" r="4.6" fill="#fff" stroke="#8c8c8c" stroke-width="1.2"/></svg>
<div class="r" style="left:689px;top:94px;width:213px;height:240px;background:#fff;box-sizing:border-box;border:1px solid #c6c6c6;box-shadow:1px 2px 4px rgba(0,0,0,0.22);"></div>
<div class="r" style="left:690px;top:95px;width:211px;height:22px;background:#e9e9e9;"></div>
<svg class="r" style="left:699.00px;top:109.60px;overflow:visible" width="1" height="1"><text x="0" y="0" text-anchor="start" font-family="Liberation Sans" font-size="10.70" fill="#444444" font-weight="bold">Cascade</text></svg>
<div class="r" style="left:690px;top:117px;width:56px;height:56px;background:#c6c6c6;"></div>
<svg class="r" style="left:690px;top:117px;" width="56" height="56" viewBox="0 0 56 56"><path d="M8.5 10v36.5h40" fill="none" stroke="#7a7a7a" stroke-width="1.1"/><rect x="32" y="11" width="7" height="35" fill="#d2d2d2"/><rect x="10.5" y="19.5" width="6" height="27" fill="#fff" stroke="#7a7a7a" stroke-width="1"/><rect x="18" y="19" width="6" height="5.5" fill="#7a7a7a"/><rect x="25" y="24" width="6" height="7.5" fill="#7a7a7a"/><rect x="39.5" y="12" width="6.5" height="34.5" fill="#fff" stroke="#7a7a7a" stroke-width="1"/></svg>
<div class="r" style="left:690px;top:173px;width:211px;height:22px;background:#e9e9e9;"></div>
<svg class="r" style="left:699.00px;top:188.20px;overflow:visible" width="1" height="1"><text x="0" y="0" text-anchor="start" font-family="Liberation Sans" font-size="10.70" fill="#444444" font-weight="bold">Statistique</text></svg>
<svg class="r" style="left:694px;top:200px;" width="20" height="110" viewBox="0 0 20 110"><path d="M4.5 4v36h15" fill="none" stroke="#8a8a8a" stroke-width="1"/><path d="M8.5 15v25" stroke="#8a8a8a" stroke-width="1"/><path d="M8.5 24h2" stroke="#8a8a8a"/><path d="M4.5 60v36h15" fill="none" stroke="#8a8a8a" stroke-width="1"/><path d="M9.5 69v10" stroke="#8a8a8a"/><rect x="7" y="72" width="5" height="3" fill="#fff" stroke="#8a8a8a" stroke-width="0.9"/><rect x="7" y="79" width="5" height="17" fill="#b0b0b0"/></svg>
<div class="r" style="left:690px;top:307px;width:211px;height:1px;background:#e1e1e1;"></div>
<svg class="r" style="left:693px;top:311px;" width="17" height="18" viewBox="0 0 17 18"><path d="M1 2v15h16" fill="none" stroke="#8a8a8a" stroke-width="1"/><path d="M4 7v10M7 11v6M10 9v8M13 6v11" stroke="#8a8a8a" stroke-width="1.6"/><path d="M4 3v2M10 4v3M7 8h2M13 3h2" stroke="#8a8a8a" stroke-width="1"/></svg>
<div class="r" style="left:709px;top:175px;width:267px;height:159px;background:#fff;box-sizing:border-box;border:1px solid #bdbdbd;box-shadow:2px 3px 4px rgba(0,0,0,0.2);"></div>
<svg class="r" style="left:721.30px;top:192.60px;overflow:visible" width="1" height="1"><text x="0" y="0" text-anchor="start" font-family="Liberation Sans" font-size="10.74" fill="#444444" font-weight="bold">Cascade</text></svg>
<svg class="r" style="left:721.30px;top:214.50px;overflow:visible" width="1" height="1"><text x="0" y="0" text-anchor="start" font-family="Liberation Sans" font-size="11.76" fill="#505050">Utilisez ce type de graphique pour :</text></svg>
<svg class="r" style="left:721.30px;top:229.50px;overflow:visible" width="1" height="1"><text x="0" y="0" text-anchor="start" font-family="Liberation Sans" font-size="11.98" fill="#505050">• montrer l'effet cumulé d'une série de valeurs</text></svg>
<svg class="r" style="left:721.30px;top:244.50px;overflow:visible" width="1" height="1"><text x="0" y="0" text-anchor="start" font-family="Liberation Sans" font-size="11.61" fill="#505050">positives et négatives.</text></svg>
<svg class="r" style="left:721.30px;top:274.50px;overflow:visible" width="1" height="1"><text x="0" y="0" text-anchor="start" font-family="Liberation Sans" font-size="11.62" fill="#505050">Utilisez-le lorsque :</text></svg>
<svg class="r" style="left:721.30px;top:289.50px;overflow:visible" width="1" height="1"><text x="0" y="0" text-anchor="start" font-family="Liberation Sans" font-size="11.67" fill="#505050">• vous disposez de données qui représentent</text></svg>
<svg class="r" style="left:721.30px;top:304.50px;overflow:visible" width="1" height="1"><text x="0" y="0" text-anchor="start" font-family="Liberation Sans" font-size="11.59" fill="#505050">des flux entrants et sortants, par exemple, des</text></svg>
<svg class="r" style="left:721.30px;top:319.50px;overflow:visible" width="1" height="1"><text x="0" y="0" text-anchor="start" font-family="Liberation Sans" font-size="11.67" fill="#505050">données financières.</text></svg>
<div class="r" style="left:9px;top:968px;width:1580px;height:28px;background:#e6e6e6;"></div>
<div class="r" style="left:9px;top:968px;width:1580px;height:1px;background:#c6c6c6;"></div>
<svg class="r" style="left:34px;top:978px;" width="8" height="10" viewBox="0 0 8 10"><path d="M6 0v9L0.5 4.5z" fill="#217346"/></svg>
<svg class="r" style="left:63px;top:978px;" width="8" height="10" viewBox="0 0 8 10"><path d="M1 0v9l5.5-4.5z" fill="#217346"/></svg>
<div class="r" style="left:90px;top:986px;width:2px;height:2px;background:#217346;"></div>
<div class="r" style="left:95px;top:986px;width:2px;height:2px;background:#217346;"></div>
<div class="r" style="left:100px;top:986px;width:2px;height:2px;background:#217346;"></div>
<div class="r" style="left:109px;top:973px;width:1px;height:19px;background:#bdbdbd;"></div>
<div class="r" style="left:207px;top:973px;width:1px;height:19px;background:#bdbdbd;"></div>
<div class="r" style="left:502px;top:973px;width:1px;height:19px;background:#bdbdbd;"></div>
<div class="r" style="left:564px;top:973px;width:1px;height:19px;background:#bdbdbd;"></div>
<div class="r" style="left:627px;top:973px;width:1px;height:19px;background:#bdbdbd;"></div>
<div class="r" style="left:702px;top:973px;width:1px;height:19px;background:#bdbdbd;"></div>
<div class="r" style="left:770px;top:973px;width:1px;height:19px;background:#bdbdbd;"></div>
<div class="r" style="left:840px;top:973px;width:1px;height:19px;background:#bdbdbd;"></div>
<div class="r" style="left:305px;top:968px;width:130px;height:25px;background:#fff;box-sizing:border-box;border-left:1px solid #c6c6c6;border-right:1px solid #c6c6c6;"></div>
<div class="r" style="left:305px;top:991px;width:130px;height:2px;background:#217346;"></div>
<svg class="r" style="left:121.60px;top:985.80px;overflow:visible" width="1" height="1"><text x="0" y="0" text-anchor="start" font-family="Liberation Sans" font-size="12.35" fill="#444444">GeForce 660</text></svg>
<svg class="r" style="left:219.30px;top:985.80px;overflow:visible" width="1" height="1"><text x="0" y="0" text-anchor="start" font-family="Liberation Sans" font-size="12.44" fill="#444444">GeForce 650</text></svg>
<svg class="r" style="left:448.00px;top:985.80px;overflow:visible" width="1" height="1"><text x="0" y="0" text-anchor="start" font-family="Liberation Sans" font-size="12.04" fill="#444444">Feuil18</text></svg>
<svg class="r" style="left:514.60px;top:985.80px;overflow:visible" width="1" height="1"><text x="0" y="0" text-anchor="start" font-family="Liberation Sans" font-size="12.63" fill="#444444">Hawai</text></svg>
<svg class="r" style="left:577.00px;top:985.80px;overflow:visible" width="1" height="1"><text x="0" y="0" text-anchor="start" font-family="Liberation Sans" font-size="13.47" fill="#444444">Tonga</text></svg>
<svg class="r" style="left:641.30px;top:985.80px;overflow:visible" width="1" height="1"><text x="0" y="0" text-anchor="start" font-family="Liberation Sans" font-size="12.76" fill="#444444">Maxwell</text></svg>
<svg class="r" style="left:716.00px;top:985.80px;overflow:visible" width="1" height="1"><text x="0" y="0" text-anchor="start" font-family="Liberation Sans" font-size="12.20" fill="#444444">Feuil17</text></svg>
<svg class="r" style="left:784.00px;top:985.80px;overflow:visible" width="1" height="1"><text x="0" y="0" text-anchor="start" font-family="Liberation Sans" font-size="12.94" fill="#444444">Titan X</text></svg>
<svg class="r" style="left:851.70px;top:985.80px;overflow:visible" width="1" height="1"><text x="0" y="0" text-anchor="start" font-family="Liberation Sans" font-size="13.14" fill="#444444">980 Ti</text></svg>
<svg class="r" style="left:317.00px;top:985.80px;overflow:visible" width="1" height="1"><text x="0" y="0" text-anchor="start" font-family="Liberation Sans" font-size="12.48" fill="#217346" font-weight="bold">Rebranding R7R9</text></svg>
<div class="r" style="left:897px;top:986px;width:2px;height:2px;background:#217346;"></div>
<div class="r" style="left:902px;top:986px;width:2px;height:2px;background:#217346;"></div>
<div class="r" style="left:907px;top:986px;width:2px;height:2px;background:#217346;"></div>
<svg class="r" style="left:919px;top:973px;" width="19" height="19" viewBox="0 0 19 19"><circle cx="9.5" cy="9.5" r="8" fill="none" stroke="#6d6d6d" stroke-width="1.3"/><path d="M9.5 5v9M5 9.5h9" stroke="#6d6d6d" stroke-width="1.5"/></svg>
<div class="r" style="left:957px;top:977px;width:2px;height:2px;background:#b4b4b4;"></div>
<div class="r" style="left:957px;top:981px;width:2px;height:2px;background:#b4b4b4;"></div>
<div class="r" style="left:957px;top:985px;width:2px;height:2px;background:#b4b4b4;"></div>
<div class="r" style="left:975px;top:975px;width:593px;height:15px;background:#dcdcdc;"></div>
<div class="r" style="left:975px;top:975px;width:16px;height:15px;background:#fff;box-sizing:border-box;border:1px solid #c6c6c6;"></div>
<svg class="r" style="left:980px;top:978px;" width="6" height="9" viewBox="0 0 6 9"><path d="M5 0v8L0.5 4z" fill="#777"/></svg>
<div class="r" style="left:990px;top:975px;width:533px;height:15px;background:#fff;box-sizing:border-box;border:1px solid #c6c6c6;"></div>
<div class="r" style="left:1553px;top:975px;width:15px;height:15px;background:#fff;box-sizing:border-box;border:1px solid #c6c6c6;"></div>
<svg class="r" style="left:1557px;top:978px;" width="6" height="9" viewBox="0 0 6 9"><path d="M1 0v8l4.5-4z" fill="#777"/></svg>
<div class="r" style="left:9px;top:996px;width:1580px;height:22px;background:#f0f0f0;"></div>
<div class="r" style="left:9px;top:996px;width:1580px;height:1px;background:#d5d5d5;"></div>
<svg class="r" style="left:16.50px;top:1010.50px;overflow:visible" width="1" height="1"><text x="0" y="0" text-anchor="start" font-family="Liberation Sans" font-size="10.41" fill="#444444">Prêt</text></svg>
<svg class="r" style="left:919.70px;top:1010.60px;overflow:visible" width="1" height="1"><text x="0" y="0" text-anchor="start" font-family="Liberation Sans" font-size="11.15" fill="#444444">Moyenne : 325,3994861</text></svg>
<svg class="r" style="left:1056.40px;top:1010.60px;overflow:visible" width="1" height="1"><text x="0" y="0" text-anchor="start" font-family="Liberation Sans" font-size="11.21" fill="#444444">Nb (non vides) : 94</text></svg>
<svg class="r" style="left:1167.50px;top:1010.60px;overflow:visible" width="1" height="1"><text x="0" y="0" text-anchor="start" font-family="Liberation Sans" font-size="10.68" fill="#444444">Somme : 23428,763</text></svg>
<div class="r" style="left:1283px;top:997px;width:38px;height:21px;background:#d4d4d4;"></div>
<svg class="r" style="left:1294px;top:1000px;" width="15" height="14" viewBox="0 0 15 14"><rect x="0.5" y="0.5" width="14" height="13" fill="none" stroke="#555" stroke-width="1"/><path d="M5.5 0v14" stroke="#555" stroke-width="1"/><path d="M10.5 0v14" stroke="#555" stroke-width="1"/><path d="M0 4.5h15" stroke="#555" stroke-width="1"/><path d="M0 9.5h15" stroke="#555" stroke-width="1"/></svg>
<svg class="r" style="left:1333px;top:1000px;" width="15" height="14" viewBox="0 0 15 14"><rect x="0.5" y="0.5" width="13" height="13" fill="none" stroke="#555"/><rect x="3" y="3" width="8" height="8" fill="none" stroke="#555"/><path d="M4.5 5.5h5M4.5 7.5h5" stroke="#555"/></svg>
<svg class="r" style="left:1371px;top:1000px;" width="15" height="14" viewBox="0 0 15 14"><rect x="0.5" y="0.5" width="13" height="13" fill="none" stroke="#555"/><path d="M5.5 0.5v6h-5" fill="none" stroke="#555"/></svg>
<div class="r" style="left:1402px;top:1006px;width:7px;height:2px;background:#555;"></div>
<div class="r" style="left:1412px;top:1006px;width:100px;height:1px;background:#9a9a9a;"></div>
<div class="r" style="left:1460px;top:1001px;width:4px;height:12px;background:#555;"></div>
<svg class="r" style="left:1516px;top:1002px;" width="9" height="9" viewBox="0 0 9 9"><path d="M4.5 0v9M0 4.5h9" stroke="#555" stroke-width="1.8"/></svg>
<svg class="r" style="left:1539.60px;top:1010.60px;overflow:visible" width="1" height="1"><text x="0" y="0" text-anchor="start" font-family="Liberation Sans" font-size="10.37" fill="#444444">100 %</text></svg>
</body></html>
